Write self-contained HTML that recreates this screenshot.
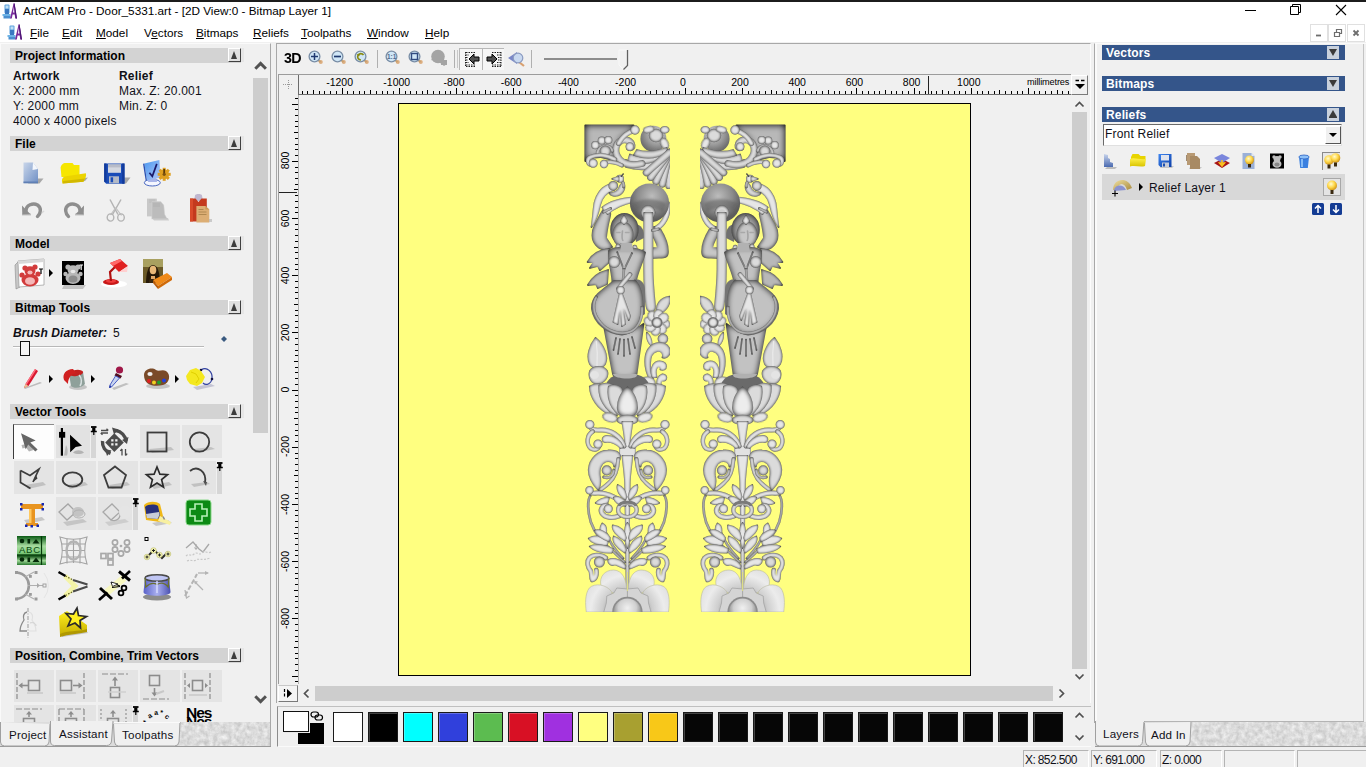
<!DOCTYPE html>
<html lang="en">
<head>
<meta charset="utf-8">
<title>ArtCAM Pro - Door_5331.art - [2D View:0 - Bitmap Layer 1]</title>
<style>
*{box-sizing:border-box;margin:0;padding:0}
html,body{width:1366px;height:767px;overflow:hidden;background:#f0f0f0;font-family:"Liberation Sans",sans-serif;color:#000}
.abs{position:absolute}
#app{position:relative;width:1366px;height:767px;overflow:hidden;background:#f0f0f0}
#titlebar{position:absolute;left:0;top:0;width:1366px;height:22px;background:#fff;border-top:2px solid #1c1c1c}
#titlebar .t{position:absolute;left:23px;top:1px;font-size:11.75px;line-height:16px;white-space:nowrap;color:#000}
#menubar{position:absolute;left:0;top:22px;width:1366px;height:20px;background:#fff}
#menubar span{position:absolute;top:3px;font-size:11.75px;line-height:16px;white-space:nowrap}
#menubar u{text-decoration:underline;text-underline-offset:1px}
.hdr{position:absolute;left:10px;width:231px;height:15px;background:#d3d3d3;font-weight:bold;font-size:12px;line-height:15px;padding-left:5px;padding-top:1px;color:#10101c;white-space:nowrap;color:#000}
.hbtn{position:absolute;left:228px;width:13px;height:14px;margin-top:-1px;background:#e0e0e0;border-right:1px solid #404040;border-bottom:1px solid #404040;border-left:1px solid #fff;border-top:1px solid #fff;box-shadow:3px 0 0 #e6e6e6}
.hbtn:after{content:"";position:absolute;left:2px;top:2px;border-left:3.5px solid transparent;border-right:3.5px solid transparent;border-bottom:8px solid #3c3c3c}

.txt{position:absolute;font-size:12px;line-height:15px;white-space:nowrap;margin-top:1px;letter-spacing:.2px;color:#101018}
.b{font-weight:bold}
.bhdr{position:absolute;left:1102px;width:243px;height:15px;background:#34558a;color:#fff;font-weight:bold;font-size:12px;line-height:15px;padding-left:4px;padding-top:1px;letter-spacing:.15px}
.bbtn{position:absolute;left:1327px;width:12px;height:13px;background:#c9d1dc}
.tri-d:after{content:"";position:absolute;left:2px;top:3px;border-left:4px solid transparent;border-right:4px solid transparent;border-top:7px solid #3a3a3a}
.tri-u:after{content:"";position:absolute;left:2px;top:2px;border-left:4px solid transparent;border-right:4px solid transparent;border-bottom:7px solid #3a3a3a}
.tri-u:before{content:"";position:absolute;left:2px;top:9px;width:8px;height:1px;background:#3a3a3a}
.sw{position:absolute;top:712px;width:30px;height:30px;border:1px solid #1a1a1a;box-shadow:inset 1px 1px 0 rgba(255,255,255,.25)}
.tb{position:absolute;width:36px;height:32px;background:#e4e4e4}
svg{position:absolute;overflow:visible}
.rl{font-size:10.500px;line-height:13px;white-space:nowrap}
</style>
</head>
<body>
<div id="app">
<div id="titlebar">
<svg class="abs" style="left:2px;top:1px" width="16" height="17" viewBox="0 0 16 17"><g id="appico"><rect x="2.5" y="1.5" width="5" height="9" rx="1" fill="#5aa0dc"/><rect x="3.5" y="2.5" width="3" height="3" fill="#bfe0f6"/><rect x="3" y="6" width="4" height="5" fill="#3a78c0"/><rect x="0.5" y="11" width="8" height="2" fill="#6db3e6"/><rect x="1.5" y="13" width="7" height="2.5" fill="#4a8fd0"/><path d="M8 15.5 L11.6 0.5 L12.6 0.5 L15 15.5 L13.2 15.5 L12.7 11.5 L10.6 11.5 L9.8 15.5 Z M11 9.5 L12.5 9.5 L11.9 4 Z" fill="#7a2a9a" fill-rule="evenodd"/><path d="M11.6 0.5 L12.6 0.5 L15 15.5 L13.8 15.5 Z" fill="#4a1672"/></g></svg>
<div class="t">ArtCAM Pro - Door_5331.art - [2D View:0 - Bitmap Layer 1]</div>
<svg class="abs" style="left:1244px;top:-1px" width="110" height="20" viewBox="0 0 110 20" fill="none" stroke="#000" stroke-width="1"><path d="M1 9.5H12"/><path d="M46.5 5.5h8v8h-8z M48.5 5.5v-2h8v8h-2" /><path d="M92 4l10 10M102 4L92 14" stroke-width="1.1"/></svg>
</div>
<div id="menubar">
<svg class="abs" style="left:7px;top:2px" width="16" height="17" viewBox="0 0 16 17"><use href="#appico"/></svg>
<span style="left:30px"><u>F</u>ile</span>
<span style="left:62px"><u>E</u>dit</span>
<span style="left:96px"><u>M</u>odel</span>
<span style="left:144px">V<u>e</u>ctors</span>
<span style="left:196px"><u>B</u>itmaps</span>
<span style="left:253px"><u>R</u>eliefs</span>
<span style="left:301px"><u>T</u>oolpaths</span>
<span style="left:367px"><u>W</u>indow</span>
<span style="left:425px"><u>H</u>elp</span>
<svg class="abs" style="left:1310px;top:1px" width="56" height="20" viewBox="0 0 56 20"><g fill="none" stroke="#e0e0e0"><rect x=".5" y="1.5" width="17" height="17"/><rect x="18.5" y="1.5" width="17" height="17"/><rect x="37.5" y="1.5" width="17" height="17"/></g><g stroke="#6e6e6e" fill="none" stroke-width="1.8"><path d="M6 12.5h5"/><path d="M24.5 9.5h5v4h-5z M26.5 9v-2.5h5v4h-2" stroke-width="1.2"/><path d="M43.5 7.5l5 5M48.5 7.5l-5 5"/></g></svg>
</div>
<!-- status bar -->
<div class="abs" style="left:0;top:747px;width:1366px;height:20px;background:#f0f0f0"></div>
<div class="abs" style="left:1023px;top:750px;width:66px;height:17px;border-left:1px solid #b4b4b4;border-top:1px solid #b4b4b4;border-right:1px solid #fff"></div>
<div class="abs" style="left:1091px;top:750px;width:66px;height:17px;border-left:1px solid #b4b4b4;border-top:1px solid #b4b4b4;border-right:1px solid #fff"></div>
<div class="abs" style="left:1160px;top:750px;width:62px;height:17px;border-left:1px solid #b4b4b4;border-top:1px solid #b4b4b4;border-right:1px solid #fff"></div>
<div class="abs" style="left:1224px;top:750px;width:71px;height:17px;border-left:1px solid #b4b4b4;border-top:1px solid #b4b4b4;border-right:1px solid #fff"></div>
<div class="abs" style="left:1297px;top:750px;width:69px;height:17px;border-left:1px solid #b4b4b4;border-top:1px solid #b4b4b4"></div>
<div class="txt" style="left:1025px;top:752px;font-size:12px;letter-spacing:-.62px">X: 852.500</div>
<div class="txt" style="left:1093px;top:752px;font-size:12px;letter-spacing:-.62px">Y: 691.000</div>
<div class="txt" style="left:1162px;top:752px;font-size:12px;letter-spacing:-.62px">Z: 0.000</div>
<!-- LEFT PANEL -->
<svg width="0" height="0" style="left:0;top:0"><defs>
<filter id="bl1" x="-30%" y="-30%" width="160%" height="160%"><feGaussianBlur stdDeviation="0.6"/></filter>
<filter id="bl2" x="-30%" y="-30%" width="160%" height="160%"><feGaussianBlur stdDeviation="1.2"/></filter>
<filter id="bl05" x="-30%" y="-30%" width="160%" height="160%"><feGaussianBlur stdDeviation="0.35"/></filter>
<linearGradient id="gdoc" x1="0" y1="0" x2="1" y2="1"><stop offset="0" stop-color="#c9d6ea"/><stop offset="1" stop-color="#6f8fc4"/></linearGradient>
<linearGradient id="gfold" x1="0" y1="0" x2="0" y2="1"><stop offset="0" stop-color="#fff04a"/><stop offset="1" stop-color="#d9c400"/></linearGradient>
<linearGradient id="gblue" x1="0" y1="0" x2="1" y2="1"><stop offset="0" stop-color="#3f86f0"/><stop offset="1" stop-color="#0c3fa8"/></linearGradient>
<linearGradient id="ggray" x1="0" y1="0" x2="0" y2="1"><stop offset="0" stop-color="#d8d8d8"/><stop offset="1" stop-color="#a8a8a8"/></linearGradient>
<radialGradient id="gbulb" cx=".4" cy=".35" r=".7"><stop offset="0" stop-color="#fffbd0"/><stop offset=".5" stop-color="#ffd84a"/><stop offset="1" stop-color="#c88a10"/></radialGradient>
</defs></svg>
<div class="abs" style="left:0;top:43px;width:271px;height:680px;background:#f0f0f0;border-top:1px solid #fafafa;border-right:1px solid #a8a8a8;border-left:1px solid #fafafa"></div>
<!-- scrollbar -->
<div class="abs" style="left:253px;top:48px;width:16px;height:667px;background:#f0f0f0"></div>
<div class="abs" style="left:253px;top:78px;width:15px;height:355px;background:#cdcdcd"></div>
<svg style="left:253px;top:55px" width="16" height="16" viewBox="0 0 16 16"><path d="M2.300 13.700L7.600 8.400L12.900 13.700" fill="none" stroke="#525252" stroke-width="3"/></svg>
<svg style="left:253px;top:692px" width="16" height="16" viewBox="0 0 16 16"><path d="M2.300 4.300L7.600 9.600L12.900 4.300" fill="none" stroke="#525252" stroke-width="3"/></svg>

<div class="hdr" style="top:48px">Project Information</div><div class="hbtn" style="top:49px"></div>
<div class="txt b" style="left:13px;top:68px">Artwork</div>
<div class="txt b" style="left:119px;top:68px">Relief</div>
<div class="txt" style="left:13px;top:83px">X: 2000 mm</div>
<div class="txt" style="left:119px;top:83px">Max. Z: 20.001</div>
<div class="txt" style="left:13px;top:98px">Y: 2000 mm</div>
<div class="txt" style="left:119px;top:98px">Min. Z: 0</div>
<div class="txt" style="left:13px;top:113px">4000 x 4000 pixels</div>

<div class="hdr" style="top:136px">File</div><div class="hbtn" style="top:137px"></div>
<!-- file icons row1 -->
<svg style="left:20px;top:159px" width="28" height="28" viewBox="0 0 28 28">
<path d="M12 19.500h11.500l-4 5H8z" fill="#8a8a8a" opacity=".7" filter="url(#bl05)"/>
<path d="M3.500 3.500h9.500l5 6.500v14.200H3.500z" fill="url(#gdoc)"/><path d="M13 3.500l5 6.500-5.500 1z" fill="#f4f7fc"/><path d="M3.500 22.500h14.500v1.700H3.500z" fill="#5f7fb4"/></svg>
<svg style="left:58px;top:159px" width="32" height="28" viewBox="0 0 32 28">
<path d="M22 20l8-1.500-3 3.500-8 1z" fill="#8a8a8a" opacity=".7" filter="url(#bl05)"/>
<path d="M2.600 8.500C3 6 5 4.500 6.500 4h8l1.500 2h5.500v12H3.500z" fill="#f6e600"/>
<path d="M4.600 24.600C3.500 22 3.500 19 6.500 17.500L27.900 14.300C28.500 17 27.500 20 25.400 22.700Z" fill="#ecd400"/><path d="M4.600 24.600L25.400 22.700C26 21.500 26.500 20.500 26.800 19.500L5 22Z" fill="#d2b800"/></svg>
<svg style="left:102px;top:159px" width="30" height="28" viewBox="0 0 30 28">
<path d="M20 18.500h8.500l-4.500 6H18z" fill="#8a8a8a" opacity=".7" filter="url(#bl05)"/>
<path d="M2.200 4.400h20.300v20.300H4.200l-2-2z" fill="#1a4cb8"/><path d="M2.200 4.400h2.300v18.500l-2.300-.2zM20.200 4.400h2.300v20.300h-2.300z" fill="#123a9a"/>
<rect x="6" y="5.400" width="13" height="8.400" fill="#d4d8e0"/><path d="M6 5.400h13v3H6z" fill="#b8bcc8"/><rect x="7" y="17.300" width="10" height="7" fill="#b4bac6"/><rect x="8.600" y="18.300" width="2.500" height="5" fill="#1a4cb8"/></svg>
<svg style="left:142px;top:157px" width="32" height="30" viewBox="0 0 32 30">
<defs><linearGradient id="gscr" x1="0" y1="0" x2="1" y2="1"><stop offset="0" stop-color="#4a98f0"/><stop offset="1" stop-color="#b4c8f8"/></linearGradient></defs>
<ellipse cx="10.300" cy="25.700" rx="8" ry="3.300" fill="#f4f6ff" stroke="#4a68c0" stroke-width="1"/><path d="M7 20h7l1 5H6z" fill="#a8b4e8"/>
<path d="M2.400 6.500l15-3.500 1 17.500-13.500 3z" fill="url(#gscr)"/><path d="M2.400 6.500l2.500 17 -1.200.2-2.700-17z" fill="#2a50b0"/>
<path d="M7.400 15.800l2.900 3.500 4.500-12.400" fill="none" stroke="#1a1a6a" stroke-width="1.700"/>
<g fill="#dea020"><circle cx="22.200" cy="17.300" r="4.800"/><rect x="20.700" y="10.800" width="3" height="13"/><rect x="15.700" y="15.800" width="13" height="3"/><rect x="20.700" y="10.800" width="3" height="13" transform="rotate(45 22.200 17.300)"/><rect x="20.700" y="10.800" width="3" height="13" transform="rotate(-45 22.200 17.300)"/></g><path d="M22.200 17.300V12" stroke="#5a3a08" stroke-width="1.800"/><circle cx="22.200" cy="17.300" r="1.600" fill="#7a5210"/></svg>
<!-- file icons row2 -->
<svg style="left:18px;top:194px" width="30" height="30" viewBox="0 0 30 30">
<path d="M4 20.500h9" stroke="#c4c4c4" stroke-width="2"/><path d="M20 22l6-5" stroke="#d8d8d8" stroke-width="1.500"/>
<path d="M8 17C8 11 15 8.500 19.500 11C24 14 22.500 20 19.500 22.500" fill="none" stroke="#8e8e8e" stroke-width="3.400" stroke-linecap="round"/><path d="M4 11.500l.3 9 8.200-.3z" fill="#8e8e8e"/></svg>
<svg style="left:58px;top:194px" width="30" height="30" viewBox="0 0 30 30">
<path d="M17 20.500h9" stroke="#c4c4c4" stroke-width="2"/>
<path d="M22 17C22 11 15 8.500 10.500 11C6 14 7.500 20 10.500 22.500" fill="none" stroke="#8e8e8e" stroke-width="3.400" stroke-linecap="round"/><path d="M26 11.500l-.3 9-8.200-.3z" fill="#8e8e8e"/></svg>
<svg style="left:103px;top:194px" width="26" height="32" viewBox="0 0 26 32">
<path d="M7 5.500l8 15M18 5.500L9.500 20.500" stroke="#b4b4b4" stroke-width="1.500" fill="none"/><path d="M12.500 13.500l6 8M12.500 14l-5 7" stroke="#c0c0c0" stroke-width="1.200"/><ellipse cx="7.500" cy="23.500" rx="3.300" ry="3.600" fill="none" stroke="#b4b4b4" stroke-width="1.400"/><ellipse cx="18" cy="23.500" rx="3.300" ry="3.600" fill="none" stroke="#b4b4b4" stroke-width="1.400"/></svg>
<svg style="left:143px;top:194px" width="28" height="30" viewBox="0 0 28 30">
<path d="M4 4.600h9.800v17.800H4z" fill="#c8c8c8"/><path d="M6 6h6M6 8h6" stroke="#b8b8b8" stroke-width=".8"/><path d="M8.800 7.600h9l3 3.500 1 9.500 2.500 4.500H8.800z" fill="#bcbcbc" stroke="#d8d8d8" stroke-width=".5"/><path d="M10 10h7M10 12h7" stroke="#adadad" stroke-width=".8"/><path d="M9 24h16l1 2.500H11z" fill="#c4c4c4" opacity=".8"/></svg>
<svg style="left:187px;top:192px" width="28" height="32" viewBox="0 0 28 32">
<path d="M8 3.600C8 1.600 15 1.600 15 3.600L16 9H7z" fill="#c0b8d0"/><path d="M3 6.600h5.500l3 3.500 3-3.500H19.800v22.800H3z" fill="#c43a1e"/><path d="M3 6.600h3v22.800H3z" fill="#d84a2a"/>
<path d="M9.400 14h9l3.900 3.500v13H9.400z" fill="#dcae74"/><path d="M18.400 14v3.500h3.900z" fill="#c89858"/><path d="M11.500 17.500h5M11.500 20h8M11.500 22.500h8" stroke="#b08850" stroke-width="1"/><path d="M22 27h3v3h-3z" fill="#b0b0b0" opacity=".6"/></svg>

<div class="hdr" style="top:236px">Model</div><div class="hbtn" style="top:237px"></div>
<!-- model icons -->
<svg style="left:13px;top:257px" width="34" height="34" viewBox="0 0 34 34">
<path d="M2 8l4-4 1 26-4 2z" fill="#c8c8c8" stroke="#8a8a8a" stroke-width=".6"/>
<path d="M5 4l26-2 0 26-25 2z" fill="#fff" stroke="#9a9a9a" stroke-width=".7"/>
<path d="M5 4l26-2v3l-26 2z" fill="#d8d8d8"/>
<g fill="#d23c3c"><circle cx="12" cy="11" r="2.6"/><circle cx="22" cy="10" r="2.6"/><ellipse cx="17" cy="14" rx="5.5" ry="4.8"/><ellipse cx="17" cy="23" rx="8.5" ry="6.5"/><circle cx="9" cy="18" r="2.6"/><circle cx="25" cy="17" r="2.6"/></g>
<ellipse cx="17" cy="24" rx="5" ry="3.8" fill="#f4b8b8"/><ellipse cx="17" cy="15.500" rx="2.6" ry="2" fill="#f4b8b8"/>
<path d="M26 12h4M28 12v5" stroke="#000" stroke-width="1.2"/></svg>
<svg style="left:48px;top:268px" width="6" height="10" viewBox="0 0 6 10"><path d="M1 1l4 4-4 4z" fill="#000"/></svg>
<svg style="left:60px;top:259px" width="28" height="32" viewBox="0 0 28 32">
<path d="M4 26h22l-3 4H2z" fill="#9a9a9a" opacity=".5" filter="url(#bl1)"/>
<rect x="2" y="2" width="22" height="24" fill="#000"/>
<g fill="#b8b8b8"><circle cx="8" cy="8" r="2.6"/><circle cx="18" cy="8" r="2.600"/><ellipse cx="13" cy="11" rx="5.5" ry="4.8"/><ellipse cx="13" cy="19" rx="7.5" ry="6"/><circle cx="5.5" cy="15" r="2.2"/><circle cx="20.500" cy="15" r="2.2"/></g>
<ellipse cx="13" cy="20" rx="4.5" ry="3.5" fill="#8c8c8c"/><ellipse cx="13" cy="12.500" rx="2.4" ry="1.8" fill="#e8e8e8"/>
<path d="M19.500 6h3.500M21.200 6v5" stroke="#fff" stroke-width="1.1"/></svg>
<svg style="left:98px;top:257px" width="34" height="34" viewBox="0 0 34 34">
<ellipse cx="16" cy="27" rx="13" ry="3.5" fill="#fff" filter="url(#bl1)"/>
<ellipse cx="13" cy="25" rx="8" ry="3" fill="#c81818"/><ellipse cx="13" cy="24" rx="5" ry="1.8" fill="#ee3a3a"/>
<path d="M13 24l-1-9 6-6" fill="none" stroke="#b01010" stroke-width="2.2"/>
<path d="M12 6l10-4 8 7-9 6z" fill="#e02020"/><path d="M21 15l9-6-1 6z" fill="#ffd0d0"/><path d="M12 6l10-4 2 2-9 5z" fill="#ff6a6a"/></svg>
<svg style="left:140px;top:256px" width="34" height="36" viewBox="0 0 34 36">
<rect x="3" y="3" width="20" height="24" fill="#6b5a28"/><rect x="3" y="3" width="20" height="8" fill="#a8a060"/>
<path d="M6 27c0-9 2-18 7-18s7 9 7 18z" fill="#241808"/><ellipse cx="13" cy="14" rx="3.3" ry="4.2" fill="#e8b878"/><path d="M9 27c0-4 2-7 4-7s5 3 5 7z" fill="#3a2810"/><path d="M11 20h4v3h-4z" fill="#e0a868"/>
<path d="M13 24l14-7 5 4-14 9z" fill="#f08a18"/><path d="M13 24l5 6v3l-5-6z" fill="#b85a08"/><path d="M18 30l14-9v3l-14 9z" fill="#d06a08"/></svg>
<div class="hdr" style="top:300px">Bitmap Tools</div><div class="hbtn" style="top:301px"></div>
<div class="txt b" style="left:13px;top:325px;font-style:italic;letter-spacing:.05px">Brush Diameter:</div>
<div class="txt" style="left:113px;top:325px">5</div>
<div class="abs" style="left:13px;top:346px;width:191px;height:2px;background:#b8b8b8;border-bottom:1px solid #fff"></div>
<div class="abs" style="left:20px;top:341px;width:10px;height:15px;background:#f4f4f4;border:1px solid #111"></div>
<svg style="left:221px;top:336px" width="6" height="6" viewBox="0 0 6 6"><path d="M3 0l3 3-3 3-3-3z" fill="#3a5a80"/></svg>
<!-- bitmap tool icons -->
<svg style="left:20px;top:366px" width="26" height="26" viewBox="0 0 26 26">
<path d="M4 22l16-6 2 1-17 6z" fill="#9a9a9a" opacity=".6" filter="url(#bl05)"/>
<path d="M4 22l1.500-4L15 3l3 2L8.500 20z" fill="#d81830"/><path d="M5.500 18L15 3l1.200.8L6.500 19z" fill="#ff7080"/><path d="M4 22l1.500-4 3 2z" fill="#e8c090"/></svg>
<svg style="left:48px;top:374px" width="6" height="10" viewBox="0 0 6 10"><path d="M1 1l4 4-4 4z" fill="#000"/></svg>
<svg style="left:61px;top:366px" width="28" height="26" viewBox="0 0 28 26">
<ellipse cx="17" cy="21" rx="9" ry="3" fill="#9a9a9a" opacity=".5" filter="url(#bl05)"/>
<path d="M8 8l14-2 2 12c-3 4-11 5-14 2z" fill="#8fa09a"/><ellipse cx="15" cy="7" rx="7.200" ry="3" fill="#c42020" transform="rotate(-8 15 7)"/>
<path d="M3 14c-2-6 2-11 9-11l3 4c-5 1-8 5-8 11z" fill="#d02020"/><path d="M18 9c3 3 3 8 1 11" fill="none" stroke="#d8e0e0" stroke-width="1.5"/></svg>
<svg style="left:90px;top:374px" width="6" height="10" viewBox="0 0 6 10"><path d="M1 1l4 4-4 4z" fill="#000"/></svg>
<svg style="left:104px;top:364px" width="28" height="28" viewBox="0 0 28 28">
<path d="M8 24l14-5 3 1-15 6z" fill="#9a9a9a" opacity=".55" filter="url(#bl05)"/>
<circle cx="15.500" cy="6" r="3.600" fill="#a01848"/><path d="M12 9l6 3-1.500 2.500-6-3z" fill="#501020"/>
<path d="M11.500 12l4 2-8 9-2 .5.500-2.500z" fill="#c8d4f0" stroke="#3a50c0" stroke-width=".9"/><path d="M6 21l-1 3 2.500-1z" fill="#2030a0"/></svg>
<svg style="left:141px;top:365px" width="32" height="26" viewBox="0 0 32 26">
<ellipse cx="17" cy="21" rx="12" ry="3" fill="#9a9a9a" opacity=".5" filter="url(#bl05)"/>
<path d="M3 10c0-6 8-8 12-5 3 2 6-1 10 1 5 3 4 12-3 14-8 2-19 1-19-10z" fill="#7a4a28"/><ellipse cx="9" cy="9" rx="2.600" ry="2" fill="#f0f0f0"/>
<circle cx="8" cy="16" r="2" fill="#e02020"/><circle cx="13" cy="17.500" r="2" fill="#f0d020"/><circle cx="18" cy="17.500" r="2" fill="#20a030"/><circle cx="23" cy="15.500" r="2" fill="#2040e0"/></svg>
<svg style="left:174px;top:374px" width="6" height="10" viewBox="0 0 6 10"><path d="M1 1l4 4-4 4z" fill="#000"/></svg>
<svg style="left:183px;top:364px" width="34" height="28" viewBox="0 0 34 28">
<path d="M10 23l18-3 4 2-18 4z" fill="#9a9ab8" opacity=".5" filter="url(#bl05)"/>
<path d="M18 6c6-4 12 2 11 9-1 5-6 7-9 4" fill="none" stroke="#3040a0" stroke-width="1.200"/><circle cx="18" cy="6" r="1.300" fill="#101040"/><circle cx="29" cy="15" r="1.300" fill="#101040"/>
<path d="M3 12l4-6 6-2 5 3 4 6-3 6-5 3-7-2-3-4z" fill="#f4e820"/><path d="M8 8l5 2 3 5-3 4" fill="none" stroke="#e0d000" stroke-width="1"/></svg>

<div class="hdr" style="top:404px">Vector Tools</div><div class="hbtn" style="top:405px"></div>
<!-- vector tools row 1 -->
<div class="abs" style="left:13px;top:424px;width:41px;height:35px;background:#fdfdfd;border-left:1px solid #3c3c3c;border-top:1px solid #8c8c8c"></div>
<div class="abs" style="left:56px;top:425px;width:34px;height:33px;background:#e2e2e2"></div>
<div class="abs" style="left:91px;top:432px;width:5px;height:26px;background:#d6d6d6"></div>
<div class="abs" style="left:140px;top:425px;width:40px;height:33px;background:#e4e4e4"></div>
<div class="abs" style="left:182px;top:425px;width:40px;height:33px;background:#e4e4e4"></div>
<svg style="left:13px;top:424px" width="42" height="36" viewBox="13 424 42 36">
<path d="M21.500 445l8-1.500 4 6.500-4.500 1.500-3-4-3.500 1z" fill="#9c9c9c" opacity=".75" filter="url(#bl1)"/>
<path d="M21 433.300L35.700 440.500L30.300 442.600L37.600 449.600L35.300 451.600L28.200 444.600L25.700 449.200Z" fill="#666"/></svg>
<svg style="left:56px;top:424px" width="36" height="36" viewBox="56 424 36 36">
<path d="M66 445c2 3 2 8 1 10.500h-3z" fill="#a8a8a8" opacity=".7" filter="url(#bl05)"/><path d="M73 452.500c3-3 8-3 11 0-3 2-8 2-11 0z" fill="#a0a0a0" opacity=".7" filter="url(#bl05)"/>
<path d="M61.900 428V455.700" stroke="#000" stroke-width="2.200"/><rect x="59" y="431.900" width="6.200" height="5.800" fill="#000"/>
<path d="M70 434.800L82 445.700L75.700 447L70.200 452.200Z" fill="#000"/></svg>
<svg style="left:90px;top:426px" width="8" height="9" viewBox="0 0 8 9"><path d="M1 1h5.500" stroke="#000" stroke-width="1.800"/><path d="M2.200 1.500h3.200v3.500H2.200z" fill="#000"/><path d="M.8 5.500h6" stroke="#000" stroke-width="1.500"/><path d="M3.800 6v3" stroke="#000" stroke-width="1.200"/></svg>
<svg style="left:98px;top:425px" width="40" height="36" viewBox="98 425 40 36" fill="none" stroke="#4c4c4c">
<path d="M116 430.500A12 12 0 0 1 126 441" stroke-width="3.400"/><path d="M125.500 446A12 12 0 0 1 116 454" stroke-width="3.400" opacity="0"/><path d="M110.500 453.500A12 12 0 0 1 102.500 441" stroke-width="3.400"/>
<path d="M112 427.500l6.500 2-4.500 5z M128.500 437l-1.500 7-5-4z M107 456l-2-7 6.500 1.500z" fill="#4c4c4c" stroke="none"/>
<path d="M114.300 433.300l9.500 9.100-9.500 9.600-9.100-9.600z" fill="#4c4c4c" stroke="none"/><path d="M111.200 439.300h2.300v2.300h-2.300zM115.200 439.300h2.300v2.300h-2.300zM111.200 443.300h2.300v2.300h-2.300zM115.200 443.300h2.300v2.300h-2.300z" fill="#f0f0f0" stroke="none"/>
<path d="M101 430.500h7M108 433h-7M106.500 428.800l1.800 1.700M102.500 434.700l-1.800-1.700" stroke-width="1.300"/><path d="M122 449v6.500M125.500 455.500V449M120.300 450.800l1.700-2M127.200 453.700l-1.700 2" stroke-width="1.300"/></svg>
<svg style="left:143px;top:428px" width="34" height="30" viewBox="0 0 34 30">
<path d="M6 21l22-2 3 3-22 3z" fill="#a0a0a0" opacity=".5" filter="url(#bl1)"/>
<rect x="4.500" y="4.500" width="19" height="19" fill="none" stroke="#3c3c3c" stroke-width="1.800"/></svg>
<svg style="left:185px;top:428px" width="34" height="30" viewBox="0 0 34 30">
<path d="M8 21l18-2 4 2-20 4z" fill="#a0a0a0" opacity=".5" filter="url(#bl1)"/>
<circle cx="14.500" cy="14" r="9.700" fill="none" stroke="#3c3c3c" stroke-width="1.800"/></svg>
<!-- row 2 -->
<div class="abs" style="left:14px;top:461px;width:40px;height:33px;background:#e4e4e4"></div>
<div class="abs" style="left:56px;top:461px;width:40px;height:33px;background:#e4e4e4"></div>
<div class="abs" style="left:98px;top:461px;width:40px;height:33px;background:#e4e4e4"></div>
<div class="abs" style="left:140px;top:461px;width:40px;height:33px;background:#e4e4e4"></div>
<div class="abs" style="left:182px;top:461px;width:34px;height:33px;background:#e4e4e4"></div>
<div class="abs" style="left:217px;top:468px;width:5px;height:26px;background:#d6d6d6"></div>
<svg style="left:216px;top:462px" width="8" height="8" viewBox="0 0 8 8"><path d="M1 1h5.500" stroke="#000" stroke-width="1.800"/><path d="M2.200 1.500h3.200v3.500H2.200z" fill="#000"/><path d="M.8 5.500h6" stroke="#000" stroke-width="1.500"/><path d="M3.800 6v3" stroke="#000" stroke-width="1.200"/></svg>
<svg style="left:17px;top:465px" width="34" height="28" viewBox="0 0 34 28">
<path d="M8 20l18-3 3 3-18 4z" fill="#a0a0a0" opacity=".5" filter="url(#bl1)"/>
<path d="M3.500 5.500l9.500 5 9-6.500-6 13" fill="none" stroke="#3c3c3c" stroke-width="1.700"/><path d="M3.500 5.500v12l10 6" fill="none" stroke="#3c3c3c" stroke-width="1.700"/><path d="M16 17l3-7 1.500 3.500z" fill="#3c3c3c"/></svg>
<svg style="left:59px;top:465px" width="34" height="28" viewBox="0 0 34 28">
<path d="M8 20l18-3 3 3-18 4z" fill="#a0a0a0" opacity=".5" filter="url(#bl1)"/>
<ellipse cx="13.500" cy="14.500" rx="9.800" ry="7.200" fill="none" stroke="#3c3c3c" stroke-width="1.800"/></svg>
<svg style="left:101px;top:463px" width="34" height="30" viewBox="0 0 34 30">
<path d="M8 22l18-3 3 3-18 4z" fill="#a0a0a0" opacity=".5" filter="url(#bl1)"/>
<path d="M14 3.500L25 12l-4.500 12.500h-13L3 12z" fill="none" stroke="#3c3c3c" stroke-width="1.800"/></svg>
<svg style="left:143px;top:463px" width="34" height="30" viewBox="0 0 34 30">
<path d="M8 22l18-3 3 3-18 4z" fill="#a0a0a0" opacity=".5" filter="url(#bl1)"/>
<path d="M14 4l2.900 7.200 7.600.5-5.900 4.900 1.900 7.500L14 20l-6.500 4.100 1.900-7.500-5.900-4.900 7.600-.5z" fill="none" stroke="#2c2c2c" stroke-width="1.700"/></svg>
<svg style="left:185px;top:463px" width="32" height="30" viewBox="0 0 32 30">
<path d="M6 21l16-2 3 2-16 3z" fill="#a0a0a0" opacity=".5" filter="url(#bl1)"/>
<path d="M5 8C12 2 22 8 20 20" fill="none" stroke="#3c3c3c" stroke-width="1.800"/><path d="M18 18l4 1-1 4z" fill="#555"/></svg>
<!-- row 3 -->
<div class="abs" style="left:56px;top:497px;width:40px;height:33px;background:#e4e4e4"></div>
<div class="abs" style="left:98px;top:497px;width:34px;height:33px;background:#e4e4e4"></div>
<div class="abs" style="left:133px;top:504px;width:5px;height:26px;background:#d6d6d6"></div>
<svg style="left:132px;top:498px" width="8" height="8" viewBox="0 0 8 8"><path d="M1 1h5.500" stroke="#000" stroke-width="1.800"/><path d="M2.200 1.500h3.200v3.500H2.200z" fill="#000"/><path d="M.8 5.500h6" stroke="#000" stroke-width="1.500"/><path d="M3.800 6v3" stroke="#000" stroke-width="1.200"/></svg>
<svg style="left:18px;top:500px" width="30" height="30" viewBox="0 0 30 30">
<path d="M6 20l18-3 3 3-18 4z" fill="#a0a0a0" opacity=".5" filter="url(#bl1)"/>
<path d="M3 4h22v5H17v14h3v3H8v-3h3V9H3z" fill="#e89420"/><path d="M11 9h2.500v14H11z" fill="#ffc860"/>
<g fill="#1828b0"><rect x="2" y="3" width="2.500" height="2.500"/><rect x="23.500" y="3" width="2.500" height="2.500"/><rect x="2" y="8" width="2.500" height="2.500"/><rect x="23.500" y="8" width="2.500" height="2.500"/><rect x="7" y="24.500" width="2.500" height="2.500"/><rect x="18.500" y="24.500" width="2.500" height="2.500"/><rect x="12.500" y="25" width="2.500" height="2.500"/></g></svg>
<svg style="left:57px;top:500px" width="36" height="30" viewBox="0 0 36 30" opacity=".75">
<path d="M6 22l20-3 4 3-20 4z" fill="#a0a0a0" opacity=".6" filter="url(#bl1)"/>
<path d="M2 12l9-8 8 8-9 8z" fill="none" stroke="#909090" stroke-width="1.300"/><ellipse cx="21" cy="12" rx="6" ry="5" fill="#b8b8b8"/><ellipse cx="22" cy="14" rx="6" ry="4" fill="none" stroke="#a0a0a0"/></svg>
<svg style="left:99px;top:500px" width="36" height="30" viewBox="0 0 36 30" opacity=".7">
<path d="M6 22l20-3 4 3-20 4z" fill="#b0b0b0" opacity=".6" filter="url(#bl1)"/>
<path d="M4 12l9-8 8 8-9 8z" fill="none" stroke="#909090" stroke-width="1.300"/><path d="M12 20c6 2 10-2 9-8" fill="none" stroke="#909090" stroke-width="1.300"/><circle cx="26" cy="12" r="6" fill="#e6e6e6"/></svg>
<svg style="left:142px;top:499px" width="32" height="32" viewBox="0 0 32 32">
<path d="M10 24l16-3 4 3-16 3z" fill="#a0a0a0" opacity=".5" filter="url(#bl1)"/>
<path d="M2 6c4-4 12-4 16-1l3 12-3 6-14-2z" fill="#f0b818"/><path d="M3 8c3-3 10-3 13-1l2 9-2 4-11-1z" fill="#28307a"/><path d="M4 15l13-2 .5 3-2 4-10.500-1z" fill="#c8ccd8"/>
<path d="M18 17l11 6-1 3-12-4z" fill="#f8f0a0"/><path d="M21 17.500l1.500 3" stroke="#888" stroke-width="1.500"/></svg>
<svg style="left:184px;top:498px" width="30" height="30" viewBox="0 0 30 30">
<rect x="2" y="2" width="25" height="25" rx="3" fill="#0c8a14" stroke="#8ad88a" stroke-width="1"/>
<path d="M11 6h7v5h5v7h-5v5h-7v-5H6v-7h5z" fill="none" stroke="#b8f0b8" stroke-width="1.600"/></svg>
<!-- vector row 4 -->
<svg style="left:16px;top:535px" width="32" height="32" viewBox="0 0 32 32">
<defs><linearGradient id="gabc" x1="0" y1="0" x2="0" y2="1"><stop offset="0" stop-color="#0a5a14"/><stop offset=".35" stop-color="#a8dca0"/><stop offset=".6" stop-color="#7ac878"/><stop offset=".68" stop-color="#0a4a10"/><stop offset=".85" stop-color="#a0d898"/><stop offset="1" stop-color="#2a7a30"/></linearGradient></defs>
<rect x="1" y="1" width="29" height="29" fill="url(#gabc)"/><path d="M1 20h29M25.500 1v29" stroke="#063a0a" stroke-width="1.200"/>
<circle cx="6" cy="6" r="2.300" fill="#042a08"/><rect x="11.500" y="4" width="2.600" height="4.500" fill="#042a08"/><path d="M16.500 8.500l3.500-4.500 3.500 4.500z" fill="#042a08"/>
<circle cx="6" cy="24.500" r="2.300" fill="#042a08"/><rect x="11.500" y="22.500" width="2.600" height="4.500" fill="#042a08"/><path d="M16.500 27l3.500-4.500 3.500 4.500z" fill="#042a08"/>
<text x="3" y="18" font-family="Liberation Sans,sans-serif" font-size="9.500" fill="#0a4a10" textLength="21">ABC</text></svg>
<svg style="left:58px;top:535px" width="32" height="32" viewBox="0 0 32 32" fill="none" stroke="#a4a4a4" stroke-width="1.100">
<path d="M2 2c9 3 18 3 27 0-3 9-3 18 0 27-9-3-18-3-27 0 3-9 3-18 0-27z"/><path d="M9 3.500v25M15.500 4v24M22 3.500v25M3.500 9h24M4 15.500h23M3.500 22h24"/><ellipse cx="15.500" cy="15.500" rx="7" ry="9" stroke-width="2.400" stroke="#b4b4b4"/></svg>
<svg style="left:99px;top:538px" width="34" height="28" viewBox="0 0 34 28" fill="none" stroke="#a8a8a8" stroke-width="1.700">
<circle cx="16" cy="4.500" r="2.600"/><circle cx="28" cy="4.500" r="2.600"/><circle cx="16" cy="11.500" r="2.600"/><circle cx="28" cy="11.500" r="2.600"/><circle cx="22" cy="15.500" r="2.600"/>
<rect x="2" y="15.500" width="5" height="5"/><rect x="9" y="15.500" width="5" height="5"/><rect x="9" y="22" width="5" height="5"/><circle cx="22" cy="8" r=".5"/></svg>
<svg style="left:142px;top:536px" width="32" height="28" viewBox="0 0 32 28">
<rect x="3" y="1.500" width="3" height="3" fill="#fff" stroke="#000" stroke-width="1"/>
<path d="M5 21l7-7 5 5 3 3 6-6" fill="none" stroke="#2c2c2c" stroke-width="2"/>
<g fill="#f4f4b0" stroke="#b8b870" stroke-width=".6"><circle cx="5" cy="21" r="2.800"/><circle cx="11.500" cy="14.500" r="2.800"/><circle cx="17.500" cy="19" r="2.800"/><circle cx="26" cy="18" r="2.800"/></g>
<g stroke="#222" stroke-width="1"><path d="M3.500 21h3M5 19.500v3M10 14.500h3M11.500 13v3M16 19h3M17.500 17.500v3M24.500 18h3M26 16.500v3"/></g></svg>
<svg style="left:184px;top:540px" width="30" height="24" viewBox="0 0 30 24" fill="none">
<path d="M2 8l7-6 6 7 4 3 6-8" stroke="#a8a8a8" stroke-width="1.300"/><path d="M12 4v5M10.500 7.500L12 9.500l1.500-2" stroke="#a8a8a8" stroke-width="1"/>
<path d="M2 16c3-3 5 1 8-2s5 2 8-1 6 1 9-1M3 21c4-2 6 1 9-1s6 1 14-2" stroke="#c8c8c8" stroke-width="1.200" stroke-dasharray="2 1.500"/></svg>
<!-- vector row 5 -->
<svg style="left:15px;top:570px" width="32" height="32" viewBox="0 0 32 32" fill="none">
<path d="M1.500 2.500C18 4 18 27 1.500 29" stroke="#9a9a9a" stroke-width="2.600"/>
<path d="M13 15.500h15M10 7l9-5M10 24l9 5" stroke="#b0b0b0" stroke-width="1.200"/><path d="M22 13l3 2.500-3 2.500z" fill="#a8a8a8"/>
<g fill="#9a9a9a"><rect x="0" y="1" width="3" height="3"/><rect x="0" y="27.500" width="3" height="3"/><rect x="14" y="5" width="2.800" height="2.800"/><rect x="14" y="23" width="2.800" height="2.800"/><rect x="19.500" y="1" width="3" height="3"/><rect x="19.500" y="27.500" width="3" height="3"/></g>
<rect x="28" y="14" width="3" height="3" stroke="#9a9a9a" stroke-width=".9"/>
<path d="M29 3A20 20 0 0 1 29 28" stroke="#e4e4e4" stroke-width="1"/></svg>
<svg style="left:57px;top:570px" width="32" height="32" viewBox="0 0 32 32" fill="none">
<path d="M8 6l10 10L8 26" stroke="#f4f4a8" stroke-width="5"/>
<path d="M1.500 2l7 4" stroke="#000" stroke-width="2.400"/><path d="M1.500 29.500l7-4" stroke="#000" stroke-width="2.400"/>
<path d="M8.500 6L16 10M8.500 25.500L16 21.500" stroke="#606020" stroke-width="1.200" stroke-dasharray="1.500 1.500"/>
<path d="M30.500 14.500L16 10M30.500 16.500L16 21.500" stroke="#4a4a4a" stroke-width="2.200"/></svg>
<svg style="left:98px;top:569px" width="34" height="34" viewBox="0 0 34 34" fill="none">
<path d="M8 24L26 9" stroke="#f8f8c0" stroke-width="7"/>
<path d="M21 2.500l11 9" stroke="#000" stroke-width="3"/><path d="M32 2L24 9.500" stroke="#000" stroke-width="2.600"/>
<path d="M2 19l12 11" stroke="#000" stroke-width="3"/><path d="M1 31l8.500-7.500" stroke="#000" stroke-width="2.600"/>
<path d="M13 13.500l9 3.500M14 18.500l8-1" stroke="#000" stroke-width="1.200"/><path d="M13 13l7 2-5.500 2.500z" fill="#fff" stroke="#000" stroke-width=".8"/>
<circle cx="26" cy="19" r="2.400" stroke="#000" stroke-width="1.800"/><circle cx="23" cy="24" r="2.400" stroke="#000" stroke-width="1.800"/></svg>
<svg style="left:141px;top:572px" width="32" height="30" viewBox="0 0 32 30">
<defs><linearGradient id="gbowl" x1="0" y1="0" x2="1" y2="0"><stop offset="0" stop-color="#5a62c8"/><stop offset=".5" stop-color="#aab0f0"/><stop offset="1" stop-color="#4a50b0"/></linearGradient></defs>
<ellipse cx="16" cy="25" rx="14" ry="3.500" fill="#8c8c8c" filter="url(#bl1)"/>
<path d="M4 6l-1.500 14c0 5 27 5 27 0L28 6z" fill="url(#gbowl)"/>
<ellipse cx="16" cy="6" rx="12" ry="3.200" fill="#c0c6f4" stroke="#4a4a4a" stroke-width="1.400"/>
<path d="M4 6l.8 9c4-4 7-5 11.200-2.500C20 10 24 11 27.200 15L28 6" fill="none" stroke="#6a7030" stroke-width="1.300"/><path d="M16 9v12" stroke="#d8dcff" stroke-width="2" opacity=".7"/></svg>
<svg style="left:183px;top:570px" width="30" height="32" viewBox="0 0 30 32" fill="none" stroke="#b4b4b4">
<path d="M2 26C6 18 10 12 14 4" stroke-width="2" stroke-dasharray="5 2"/><path d="M15 3h10" stroke-width="1.300"/><path d="M22 1l4 2-4 2z" fill="#b4b4b4" stroke="none"/>
<path d="M12 12l8 8" stroke-width="1.300"/><path d="M11 11l4 .5-3 3z" fill="#b4b4b4" stroke="none"/><path d="M2 20l1.500 8 3-2" stroke-width="1.300"/></svg>
<!-- row 6 -->
<svg style="left:18px;top:607px" width="24" height="32" viewBox="0 0 24 32" fill="none">
<path d="M10 1v30" stroke="#9a9a9a" stroke-width="1" stroke-dasharray="4 1.500 1 1.500"/>
<path d="M9 5C5 6 5 10 6 13c-2 3-4 6-4 11h7" stroke="#8a8a8a" stroke-width="1.300"/>
<path d="M11 5c4 1 4 5 3 8 2 3 4 6 4 11h-7" stroke="#e0e0e0" stroke-width="1.200"/><path d="M12 16c3-1 6 0 6 3" stroke="#d0d0d0" stroke-width="1"/></svg>
<svg style="left:57px;top:606px" width="34" height="34" viewBox="0 0 34 34">
<defs><linearGradient id="gst" x1="0" y1="0" x2="0" y2="1"><stop offset="0" stop-color="#fff020"/><stop offset="1" stop-color="#c8b000"/></linearGradient></defs>
<path d="M4 26l24-3 3 4-26 4z" fill="#9a9a9a" opacity=".5" filter="url(#bl1)"/>
<path d="M2 10l8-5 20 14v5c-8 3-18 1-27 5z" fill="url(#gst)"/><path d="M3 28c8-4 18-2 27-5v3c-9 2-18 2-27 5z" fill="#b09800"/>
<path d="M20 2l1.500 7.500 8 1-6.500 4 .5 7.500L18 17l-7 3 3-7-5-5.500 7.500.5z" fill="#fff020" stroke="#2a2a2a" stroke-width="1.700"/></svg>

<div class="hdr" style="top:648px">Position, Combine, Trim Vectors</div><div class="hbtn" style="top:649px"></div>
<!-- align row 1 -->
<div class="abs" style="left:14px;top:670px;width:40px;height:32px;background:#e4e4e4"></div>
<div class="abs" style="left:56px;top:670px;width:40px;height:32px;background:#e4e4e4"></div>
<div class="abs" style="left:98px;top:670px;width:40px;height:32px;background:#e4e4e4"></div>
<div class="abs" style="left:140px;top:670px;width:40px;height:32px;background:#e4e4e4"></div>
<div class="abs" style="left:182px;top:670px;width:40px;height:32px;background:#e4e4e4"></div>
<svg style="left:14px;top:670px" width="40" height="32" viewBox="0 0 40 32" fill="none" stroke="#8c8c8c">
<path d="M3 3v27" stroke-width="1.200" stroke-dasharray="5 2"/><rect x="14.500" y="10.500" width="11" height="10" stroke-width="1.600"/><path d="M7 15.500h7" stroke-width="1.600"/><path d="M4.500 15.500l4-3v6z" fill="#8c8c8c" stroke="none"/><path d="M13 23h16" stroke="#c8c8c8" stroke-width="1.500"/></svg>
<svg style="left:56px;top:670px" width="40" height="32" viewBox="0 0 40 32" fill="none" stroke="#8c8c8c">
<path d="M28 3v27" stroke-width="1.200" stroke-dasharray="5 2"/><rect x="4.500" y="10.500" width="11" height="10" stroke-width="1.600"/><path d="M17 15.500h7" stroke-width="1.600"/><path d="M26.500 15.500l-4-3v6z" fill="#8c8c8c" stroke="none"/><path d="M4 23h16" stroke="#c8c8c8" stroke-width="1.500"/></svg>
<svg style="left:98px;top:670px" width="40" height="32" viewBox="0 0 40 32" fill="none" stroke="#8c8c8c">
<path d="M4 4h26" stroke-width="1.200" stroke-dasharray="6 2"/><rect x="12.500" y="17.500" width="9" height="10" stroke-width="1.600"/><path d="M17 9v7" stroke-width="1.600"/><path d="M17 6.500l-3 4h6z" fill="#8c8c8c" stroke="none"/><path d="M10 22h18" stroke="#d0d0d0" stroke-width="1.500"/></svg>
<svg style="left:140px;top:670px" width="40" height="32" viewBox="0 0 40 32" fill="none" stroke="#8c8c8c">
<path d="M3 29h26" stroke-width="1.200" stroke-dasharray="6 2"/><rect x="9.500" y="5.500" width="10" height="10" stroke-width="1.600"/><path d="M14.500 18v6" stroke-width="1.600"/><path d="M14.500 26.500l-3-4h6z" fill="#8c8c8c" stroke="none"/><path d="M16 24l8-3" stroke="#c8c8c8" stroke-width="2"/></svg>
<svg style="left:182px;top:670px" width="40" height="32" viewBox="0 0 40 32" fill="none" stroke="#8c8c8c">
<path d="M3 3v27M28 3v27" stroke-width="1.200" stroke-dasharray="5 2"/><rect x="10.500" y="10.500" width="10" height="10" stroke-width="1.600"/><path d="M5 15.500l3-2.500v5zM26 15.500l-3-2.500v5z" fill="#8c8c8c" stroke="none"/><path d="M7 25h18" stroke="#c8c8c8" stroke-width="1.500"/></svg>
<!-- align row 2 (clipped) -->
<div class="abs" style="left:0;top:705px;width:252px;height:17px;overflow:hidden">
<div class="abs" style="left:14px;top:0;width:40px;height:32px;background:#e4e4e4"></div>
<div class="abs" style="left:56px;top:0;width:40px;height:32px;background:#e4e4e4"></div>
<div class="abs" style="left:98px;top:0;width:34px;height:32px;background:#e4e4e4"></div>
<div class="abs" style="left:133px;top:7px;width:5px;height:26px;background:#d6d6d6"></div>
<svg style="left:132px;top:1px" width="8" height="8" viewBox="0 0 8 8"><path d="M1 1h5.500" stroke="#000" stroke-width="1.800"/><path d="M2.200 1.500h3.200v3.500H2.200z" fill="#000"/><path d="M.8 5.500h6" stroke="#000" stroke-width="1.500"/><path d="M3.800 6v3" stroke="#000" stroke-width="1.200"/></svg>
<svg style="left:14px;top:0" width="40" height="32" viewBox="0 0 40 32" fill="none" stroke="#8c8c8c"><path d="M2 4h26" stroke-width="1.200" stroke-dasharray="6 2"/><path d="M15 6l-3 3.500h6z" fill="#8c8c8c" stroke="none"/><path d="M15 9v3" stroke-width="1.500"/><rect x="9.500" y="13.500" width="11" height="10" stroke-width="1.600"/></svg>
<svg style="left:56px;top:0" width="40" height="32" viewBox="0 0 40 32" fill="none" stroke="#8c8c8c"><path d="M3 4h25M3 4v26M28 4v26" stroke-width="1.200" stroke-dasharray="6 2"/><path d="M15 6l-3 3.500h6z" fill="#8c8c8c" stroke="none"/><path d="M15 9v3" stroke-width="1.500"/><rect x="9.500" y="13.500" width="11" height="10" stroke-width="1.600"/></svg>
<svg style="left:98px;top:0" width="40" height="32" viewBox="0 0 40 32" fill="none" stroke="#8c8c8c"><path d="M3 4v26M28 4v26" stroke-width="1.100" stroke-dasharray="2 2"/><path d="M15 5l-3 3.500h6z" fill="#8c8c8c" stroke="none"/><path d="M15 8v4" stroke-width="1.500"/><rect x="9.500" y="13.500" width="11" height="10" stroke-width="1.600"/><path d="M5 17l-2 1.500M25 17l2 1.500"/></svg>
<svg style="left:143px;top:2px" width="30" height="24" viewBox="0 0 30 24"><g font-family="Liberation Sans,sans-serif" font-size="7" font-weight="bold" fill="#000"><text x="1" y="17" transform="rotate(-50 3 15)">*</text><text x="5" y="11" transform="rotate(-30 7 9)">a</text><text x="11" y="8" transform="rotate(-10 13 6)">a</text><text x="17" y="8" transform="rotate(15 19 6)">*</text><text x="22" y="12" transform="rotate(40 24 10)">c</text></g></svg>
<div class="abs b" style="left:186px;top:-1px;font-size:15.500px;line-height:18px;letter-spacing:-1px;font-family:'Liberation Sans',sans-serif">Nes</div>
<div class="abs b" style="left:186px;top:8px;font-size:15.500px;line-height:18px;letter-spacing:-1px;font-family:'Liberation Sans',sans-serif">Nes</div>
</div>
<!-- left tabs -->
<div class="abs" style="left:0;top:722px;width:271px;height:25px;background:#dcdcdc;border-right:1px solid #a8a8a8"></div>
<svg style="left:0;top:722px" width="271" height="26" viewBox="0 0 271 26">
<defs><filter id="noise" x="0" y="0" width="100%" height="100%" color-interpolation-filters="sRGB"><feTurbulence type="fractalNoise" baseFrequency="0.22" numOctaves="3" seed="3"/><feColorMatrix type="matrix" values=".24 0 0 0 .74  .24 0 0 0 .74  .24 0 0 0 .74  0 0 0 0 1"/></filter></defs>
<rect x="180" y="0" width="90" height="24" fill="#e4e4e4"/><rect x="180" y="0" width="90" height="24" filter="url(#noise)"/>
<path d="M0 24.500h271" stroke="#9a9a9a" stroke-width="1"/>
<path d="M0.500 0v20q0 4 4 4h40q4 0 4.500-4l1-18" fill="#f0f0f0" stroke="#a0a0a0" stroke-width="1"/>
<path d="M113.500 2l1 18q.5 4 4 4h56q4 0 4.500-4l1-20" fill="#f0f0f0" stroke="#a0a0a0" stroke-width="1"/><path d="M114 .5h66" stroke="#fafafa"/>
<path d="M50.500 -1v20q0 4.500 4 4.500h52q4.500 0 5-4.500l1.500-20" fill="#f0f0f0" stroke="#a0a0a0" stroke-width="1"/>
</svg>
<div class="txt" style="left:9px;top:726px;font-size:11.600px">Project</div>
<div class="txt" style="left:59px;top:725px;font-size:11.600px">Assistant</div>
<div class="txt" style="left:122px;top:726px;font-size:11.600px">Toolpaths</div>
<!-- CENTER -->
<div class="abs" style="left:276px;top:43px;width:815px;height:660px;background:#f0f0f0;border-left:1px solid #a8a8a8;border-top:1px solid #a8a8a8;border-right:1px solid #fcfcfc"></div>
<div class="abs b" style="left:284px;top:49px;font-size:15.500px;line-height:17px;letter-spacing:-.8px;transform:scaleX(.92);transform-origin:0 0">3D</div>
<svg style="left:306px;top:48px" width="20" height="20" viewBox="0 0 20 20"><circle cx="14.800" cy="14" r="2" fill="#dcae80"/><path d="M12 12l2.500 2" stroke="#c8a070" stroke-width="2"/><circle cx="8.500" cy="8.500" r="5.400" fill="#d0e6f6" stroke="#7a8ea6" stroke-width="1.300"/><path d="M5 8.500h7M8.500 5v7" stroke="#203a70" stroke-width="1.500"/></svg>
<svg style="left:329px;top:48px" width="20" height="20" viewBox="0 0 20 20"><circle cx="14.800" cy="14" r="2" fill="#dcae80"/><path d="M12 12l2.500 2" stroke="#c8a070" stroke-width="2"/><circle cx="8.500" cy="8.500" r="5.400" fill="#d0e6f6" stroke="#7a8ea6" stroke-width="1.300"/><path d="M5 8.500h7" stroke="#203a70" stroke-width="1.700"/></svg>
<svg style="left:352px;top:48px" width="20" height="20" viewBox="0 0 20 20"><circle cx="14.800" cy="14" r="2" fill="#dcae80"/><path d="M12 12l2.500 2" stroke="#c8a070" stroke-width="2"/><circle cx="8.500" cy="8.500" r="5.400" fill="#d0e6f6" stroke="#7a8ea6" stroke-width="1.300"/><path d="M11.500 7A3.200 3.200 0 1 0 9 12" fill="none" stroke="#8a8a10" stroke-width="1.600"/><path d="M4.500 6.500l2.500 2 1.500-3z" fill="#8a8a10"/></svg>
<div class="abs" style="left:377px;top:50px;width:1px;height:18px;background:#b0b0b0"></div>
<svg style="left:383px;top:48px" width="20" height="20" viewBox="0 0 20 20"><circle cx="14.800" cy="14" r="2" fill="#dcae80"/><path d="M12 12l2.500 2" stroke="#c8a070" stroke-width="2"/><circle cx="8.500" cy="8.500" r="5.400" fill="#d0e6f6" stroke="#7a8ea6" stroke-width="1.300"/><text x="4" y="11" font-family="Liberation Sans,sans-serif" font-size="6.500" font-weight="bold" fill="#506a90">1:1</text></svg>
<svg style="left:406px;top:48px" width="20" height="20" viewBox="0 0 20 20"><circle cx="14.800" cy="14" r="2" fill="#dcae80"/><path d="M12 12l2.500 2" stroke="#c8a070" stroke-width="2"/><circle cx="8.500" cy="8.500" r="5.400" fill="#d0e6f6" stroke="#7a8ea6" stroke-width="1.300"/><rect x="5.500" y="5.500" width="6" height="6" fill="none" stroke="#304a80" stroke-width="1.400"/></svg>
<svg style="left:428px;top:48px" width="22" height="20" viewBox="0 0 22 20"><circle cx="10" cy="8.500" r="6.800" fill="#a4a4a4"/><path d="M3 12l4-4 8 2 4 6-3 2-5-4z" fill="#a4a4a4"/><rect x="13" y="12" width="6" height="5" fill="#a4a4a4"/></svg>
<div class="abs" style="left:454px;top:50px;width:1px;height:18px;background:#b0b0b0"></div>
<div class="abs" style="left:457px;top:50px;width:1px;height:18px;background:#c8c8c8"></div>
<div class="abs" style="left:459px;top:48px;width:23px;height:22px;background:#f6f6f6;border-left:1px solid #b8b8b8;border-top:1px solid #b8b8b8"></div>
<div class="abs" style="left:482px;top:48px;width:22px;height:22px;background:#f6f6f6;border-left:1px solid #b8b8b8;border-top:1px solid #b8b8b8"></div>
<svg style="left:463px;top:51px" width="18" height="17" viewBox="0 0 18 17"><path d="M3 1.500h9M3 4h3M3 6.500h2M3 9h2M3 11.500h3M3 14h9M3 15.500h9" stroke="#222" stroke-width="1.100" stroke-dasharray="1.500 1"/><path d="M2.500 1v14.500" stroke="#222" stroke-width="1" stroke-dasharray="1.500 1"/><path d="M6 8l5-5v3h5v4h-5v3z" fill="#505050" stroke="#000" stroke-width="1"/></svg>
<svg style="left:485px;top:51px" width="18" height="17" viewBox="0 0 18 17"><path d="M7 1.500h9M12 4h4M13 6.500h3M13 9h3M12 11.500h4M7 14h9M7 15.500h9" stroke="#222" stroke-width="1.100" stroke-dasharray="1.500 1"/><path d="M16 1v14.500" stroke="#222" stroke-width="1" stroke-dasharray="1.500 1"/><path d="M12 8L7 3v3H2v4h5v3z" fill="#505050" stroke="#000" stroke-width="1"/></svg>
<svg style="left:507px;top:50px" width="20" height="18" viewBox="0 0 20 18"><path d="M1 8l9-6v12z" fill="#7a86c8"/><path d="M12 12l5 4" stroke="#d8a070" stroke-width="2.200"/><circle cx="11" cy="8" r="4.800" fill="#c8d8f0" stroke="#8a9ac0" stroke-width="1.200"/></svg>
<div class="abs" style="left:531px;top:50px;width:1px;height:18px;background:#b0b0b0"></div>
<div class="abs" style="left:544px;top:58px;width:73px;height:2px;background:#8c8c8c"></div>
<svg style="left:618px;top:49px" width="12" height="22" viewBox="0 0 12 22"><path d="M1 1h8v15l-4 4-4-4z" fill="#f0f0f0" stroke="#f8f8f8" stroke-width="1"/><path d="M9.500 1v15.500l-4 4" fill="none" stroke="#606060" stroke-width="1.300"/></svg>
<div class="abs" style="left:278px;top:74px;width:793px;height:21px;background:#f0f0f0;border-top:1px solid #9c9c9c;border-bottom:1px solid #6c6c6c"></div>
<div class="abs" style="left:278px;top:75px;width:20px;height:609px;background:#f0f0f0;border-left:1px solid #9c9c9c;border-right:0"></div>
<svg style="left:0;top:0" width="1366" height="767" viewBox="0 0 1366 767" shape-rendering="crispEdges"><path d="M302.5 91V94M307.5 91V94M313.5 90V94M319.5 91V94M324.5 91V94M330.5 91V94M336.5 91V94M342.5 88V94M347.5 91V94M353.5 91V94M359.5 91V94M364.5 91V94M370.5 90V94M376.5 91V94M382.5 91V94M387.5 91V94M393.5 91V94M399.5 88V94M405.5 91V94M410.5 91V94M416.5 91V94M422.5 91V94M427.5 90V94M433.5 91V94M439.5 91V94M445.5 91V94M450.5 91V94M456.5 88V94M462.5 91V94M467.5 91V94M473.5 91V94M479.5 91V94M485.5 90V94M490.5 91V94M496.5 91V94M502.5 91V94M507.5 91V94M513.5 88V94M519.5 91V94M525.5 91V94M530.5 91V94M536.5 91V94M542.5 90V94M548.5 91V94M553.5 91V94M559.5 91V94M565.5 91V94M570.5 88V94M576.5 91V94M582.5 91V94M588.5 91V94M593.5 91V94M599.5 90V94M605.5 91V94M610.5 91V94M616.5 91V94M622.5 91V94M628.5 88V94M633.5 91V94M639.5 91V94M645.5 91V94M650.5 91V94M656.5 90V94M662.5 91V94M668.5 91V94M673.5 91V94M679.5 91V94M685.5 88V94M691.5 91V94M696.5 91V94M702.5 91V94M708.5 91V94M713.5 90V94M719.5 91V94M725.5 91V94M731.5 91V94M736.5 91V94M742.5 88V94M748.5 91V94M753.5 91V94M759.5 91V94M765.5 91V94M771.5 90V94M776.5 91V94M782.5 91V94M788.5 91V94M793.5 91V94M799.5 88V94M805.5 91V94M811.5 91V94M816.5 91V94M822.5 91V94M828.5 90V94M834.5 91V94M839.5 91V94M845.5 91V94M851.5 91V94M856.5 88V94M862.5 91V94M868.5 91V94M874.5 91V94M879.5 91V94M885.5 90V94M891.5 91V94M896.5 91V94M902.5 91V94M908.5 91V94M914.5 88V94M919.5 91V94M925.5 91V94M931.5 91V94M936.5 91V94M942.5 90V94M948.5 91V94M954.5 91V94M959.5 91V94M965.5 91V94M971.5 88V94M977.5 91V94M982.5 91V94M988.5 91V94M994.5 91V94M999.5 90V94M1005.5 91V94M1011.5 91V94M1017.5 91V94M1022.5 91V94M1028.5 88V94M1034.5 91V94M1039.5 91V94M1045.5 91V94M1051.5 91V94M1057.5 90V94M1062.5 91V94M1068.5 91V94" stroke="#000" stroke-width="1" fill="none"/><path d="M295 681.5H298M292 676.5H298M295 670.5H298M295 664.5H298M295 658.5H298M295 653.5H298M294 647.5H298M295 641.5H298M295 636.5H298M295 630.5H298M295 624.5H298M292 618.5H298M295 613.5H298M295 607.5H298M295 601.5H298M295 596.5H298M294 590.5H298M295 584.5H298M295 578.5H298M295 573.5H298M295 567.5H298M292 561.5H298M295 555.5H298M295 550.5H298M295 544.5H298M295 538.5H298M294 533.5H298M295 527.5H298M295 521.5H298M295 515.5H298M295 510.5H298M292 504.5H298M295 498.5H298M295 493.5H298M295 487.5H298M295 481.5H298M294 475.5H298M295 470.5H298M295 464.5H298M295 458.5H298M295 453.5H298M292 447.5H298M295 441.5H298M295 435.5H298M295 430.5H298M295 424.5H298M294 418.5H298M295 412.5H298M295 407.5H298M295 401.5H298M295 395.5H298M292 390.5H298M295 384.5H298M295 378.5H298M295 372.5H298M295 367.5H298M294 361.5H298M295 355.5H298M295 350.5H298M295 344.5H298M295 338.5H298M292 332.5H298M295 327.5H298M295 321.5H298M295 315.5H298M295 310.5H298M294 304.5H298M295 298.5H298M295 292.5H298M295 287.5H298M295 281.5H298M292 275.5H298M295 269.5H298M295 264.5H298M295 258.5H298M295 252.5H298M294 247.5H298M295 241.5H298M295 235.5H298M295 229.5H298M295 224.5H298M292 218.5H298M295 212.5H298M295 207.5H298M295 201.5H298M295 195.5H298M294 189.5H298M295 184.5H298M295 178.5H298M295 172.5H298M295 167.5H298M292 161.5H298M295 155.5H298M295 149.5H298M295 144.5H298M295 138.5H298M294 132.5H298M295 126.5H298M295 121.5H298M295 115.5H298M295 109.5H298M292 104.5H298M295 98.5H298" stroke="#000" stroke-width="1" fill="none"/><path d="M298.5 75V95" stroke="#6c6c6c" stroke-width="1"/><path d="M298.5 95V684" stroke="#b0b0b0" stroke-width="1"/><path d="M283 84.500h10M288.500 80v10" stroke="#9a9a9a" stroke-width="1" stroke-dasharray="1 1"/><path d="M928.500 76V94" stroke="#222" stroke-width="1"/><path d="M279 192.500H297" stroke="#222" stroke-width="1"/></svg>
<div class="abs rl" style="left:309.6px;top:76px;width:60px;text-align:center">-1200</div>
<div class="abs rl" style="left:366.8px;top:76px;width:60px;text-align:center">-1000</div>
<div class="abs rl" style="left:424.0px;top:76px;width:60px;text-align:center">-800</div>
<div class="abs rl" style="left:481.2px;top:76px;width:60px;text-align:center">-600</div>
<div class="abs rl" style="left:538.4px;top:76px;width:60px;text-align:center">-400</div>
<div class="abs rl" style="left:595.6px;top:76px;width:60px;text-align:center">-200</div>
<div class="abs rl" style="left:652.8px;top:76px;width:60px;text-align:center">0</div>
<div class="abs rl" style="left:710.0px;top:76px;width:60px;text-align:center">200</div>
<div class="abs rl" style="left:767.2px;top:76px;width:60px;text-align:center">400</div>
<div class="abs rl" style="left:824.4px;top:76px;width:60px;text-align:center">600</div>
<div class="abs rl" style="left:881.6px;top:76px;width:60px;text-align:center">800</div>
<div class="abs rl" style="left:938.8px;top:76px;width:60px;text-align:center">1000</div>
<div class="abs" style="left:1027px;top:76px;font-size:9.200px;line-height:13px;letter-spacing:-.15px">millimetres</div>
<div class="abs rl" style="left:255px;top:611.9px;width:60px;height:13px;text-align:center;transform:rotate(-90deg)">-800</div>
<div class="abs rl" style="left:255px;top:554.7px;width:60px;height:13px;text-align:center;transform:rotate(-90deg)">-600</div>
<div class="abs rl" style="left:255px;top:497.5px;width:60px;height:13px;text-align:center;transform:rotate(-90deg)">-400</div>
<div class="abs rl" style="left:255px;top:440.3px;width:60px;height:13px;text-align:center;transform:rotate(-90deg)">-200</div>
<div class="abs rl" style="left:255px;top:383.1px;width:60px;height:13px;text-align:center;transform:rotate(-90deg)">0</div>
<div class="abs rl" style="left:255px;top:325.9px;width:60px;height:13px;text-align:center;transform:rotate(-90deg)">200</div>
<div class="abs rl" style="left:255px;top:268.7px;width:60px;height:13px;text-align:center;transform:rotate(-90deg)">400</div>
<div class="abs rl" style="left:255px;top:211.5px;width:60px;height:13px;text-align:center;transform:rotate(-90deg)">600</div>
<div class="abs rl" style="left:255px;top:154.3px;width:60px;height:13px;text-align:center;transform:rotate(-90deg)">800</div>
<div class="abs" style="left:1071px;top:75px;width:17px;height:20px;background:#f0f0f0;border-left:1px solid #fff;border-top:1px solid #fff;border-right:1px solid #7a7a7a;border-bottom:1px solid #7a7a7a"></div>
<svg style="left:1074px;top:79px" width="12" height="12" viewBox="0 0 12 12"><path d="M1.500 1.500h3.500M7 1.500h3.500" stroke="#000" stroke-width="1.300"/><path d="M1 5h10l-5 5z" fill="#000"/></svg>
<div class="abs" style="left:398px;top:103px;width:573px;height:573px;background:#ffff80;border:1px solid #000"></div>
<div class="abs" style="left:1071px;top:96px;width:18px;height:588px;background:#f0f0f0"></div>
<div class="abs" style="left:1072px;top:112px;width:15px;height:557px;background:#cdcdcd"></div>
<svg style="left:1072px;top:98px" width="15" height="12" viewBox="0 0 15 12"><path d="M3.500 8.500l4-4 4 4" fill="none" stroke="#505050" stroke-width="1.700"/></svg>
<svg style="left:1072px;top:671px" width="15" height="12" viewBox="0 0 15 12"><path d="M3.500 3.500l4 4 4-4" fill="none" stroke="#505050" stroke-width="1.700"/></svg>
<div class="abs" style="left:278px;top:684px;width:812px;height:18px;background:#f0f0f0"></div>
<div class="abs" style="left:278px;top:685px;width:20px;height:17px;background:#f4f4f4;border-left:1px solid #fff;border-top:1px solid #c8c8c8;border-right:1px solid #7a7a7a;border-bottom:1px solid #7a7a7a"></div>
<svg style="left:282px;top:688px" width="12" height="11" viewBox="0 0 12 11"><path d="M2.500 1v9" stroke="#000" stroke-width="1.200" stroke-dasharray="3 1.500"/><path d="M5 1l5 4.500-5 4.500z" fill="#000"/></svg>
<svg style="left:300px;top:686px" width="12" height="15" viewBox="0 0 12 15"><path d="M8.500 3.500l-4 4 4 4" fill="none" stroke="#505050" stroke-width="1.700"/></svg>
<div class="abs" style="left:315px;top:686px;width:738px;height:15px;background:#cdcdcd"></div>
<svg style="left:1056px;top:686px" width="12" height="15" viewBox="0 0 12 15"><path d="M3.500 3.500l4 4-4 4" fill="none" stroke="#505050" stroke-width="1.700"/></svg>
<div class="abs" style="left:277px;top:706px;width:814px;height:41px;background:#f0f0f0;border-left:1px solid #8c8c8c;border-top:1px solid #c0c0c0;border-bottom:1px solid #fafafa"></div>
<div class="abs" style="left:298px;top:723px;width:26px;height:21px;background:#000"></div>
<div class="abs" style="left:283px;top:711px;width:26px;height:21px;background:#fff;border:1px solid #111;box-shadow:1px 1px 0 #e8e8e8"></div>
<svg style="left:310px;top:711px" width="14" height="11" viewBox="0 0 14 11"><rect x="1" y="1" width="7.500" height="5" rx="2.500" fill="none" stroke="#000" stroke-width="1.200"/><rect x="5" y="4" width="7.500" height="5" rx="2.500" fill="none" stroke="#000" stroke-width="1.200"/></svg>
<div class="sw" style="left:333px;background:#ffffff"></div>
<div class="sw" style="left:368px;background:#000000"></div>
<div class="sw" style="left:403px;background:#00ffff"></div>
<div class="sw" style="left:438px;background:#3040dc"></div>
<div class="sw" style="left:473px;background:#5cbc50"></div>
<div class="sw" style="left:508px;background:#d81024"></div>
<div class="sw" style="left:543px;background:#a030e0"></div>
<div class="sw" style="left:578px;background:#ffff80"></div>
<div class="sw" style="left:613px;background:#a8a030"></div>
<div class="sw" style="left:648px;background:#f8c818"></div>
<div class="sw" style="left:683px;background:#060606"></div>
<div class="sw" style="left:718px;background:#060606"></div>
<div class="sw" style="left:753px;background:#060606"></div>
<div class="sw" style="left:788px;background:#060606"></div>
<div class="sw" style="left:823px;background:#060606"></div>
<div class="sw" style="left:858px;background:#060606"></div>
<div class="sw" style="left:893px;background:#060606"></div>
<div class="sw" style="left:928px;background:#060606"></div>
<div class="sw" style="left:963px;background:#060606"></div>
<div class="sw" style="left:998px;background:#060606"></div>
<div class="sw" style="left:1033px;background:#060606"></div>
<svg style="left:1072px;top:709px" width="15" height="12" viewBox="0 0 15 12"><path d="M3.500 8.500l4-4 4 4" fill="none" stroke="#505050" stroke-width="1.700"/></svg>
<svg style="left:1072px;top:732px" width="15" height="12" viewBox="0 0 15 12"><path d="M3.500 3.500l4 4 4-4" fill="none" stroke="#505050" stroke-width="1.700"/></svg>
<!-- RELIEF -->
<svg style="left:0;top:0" width="1366" height="767" viewBox="0 0 1366 767">
<defs>
<filter id="eS" filterUnits="userSpaceOnUse" x="575" y="115" width="110" height="510" color-interpolation-filters="sRGB"><feGaussianBlur in="SourceAlpha" stdDeviation="0.9"/><feColorMatrix type="matrix" values="0 0 0 .93 -.03  0 0 0 .93 -.03  0 0 0 .93 -.03  0 0 0 0 1"/><feComposite in2="SourceAlpha" operator="in"/></filter>
<filter id="eM" filterUnits="userSpaceOnUse" x="575" y="115" width="110" height="510" color-interpolation-filters="sRGB"><feGaussianBlur in="SourceAlpha" stdDeviation="1.7"/><feColorMatrix type="matrix" values="0 0 0 .86 0  0 0 0 .86 0  0 0 0 .86 0  0 0 0 0 1"/><feComposite in2="SourceAlpha" operator="in"/></filter>
<filter id="eL" filterUnits="userSpaceOnUse" x="575" y="115" width="110" height="510" color-interpolation-filters="sRGB"><feGaussianBlur in="SourceAlpha" stdDeviation="3.2"/><feColorMatrix type="matrix" values="0 0 0 .76 0  0 0 0 .76 0  0 0 0 .76 0  0 0 0 0 1"/><feComposite in2="SourceAlpha" operator="in"/></filter>
<filter id="eD" filterUnits="userSpaceOnUse" x="575" y="115" width="110" height="510" color-interpolation-filters="sRGB"><feGaussianBlur in="SourceAlpha" stdDeviation="3"/><feColorMatrix type="matrix" values="0 0 0 .62 0  0 0 0 .62 0  0 0 0 .62 0  0 0 0 0 1"/><feComposite in2="SourceAlpha" operator="in"/></filter>
<filter id="eW" filterUnits="userSpaceOnUse" x="575" y="115" width="110" height="510" color-interpolation-filters="sRGB"><feGaussianBlur in="SourceAlpha" stdDeviation="1.400"/><feColorMatrix type="matrix" values="0 0 0 .72 0  0 0 0 .72 0  0 0 0 .72 0  0 0 0 0 1"/><feComposite in2="SourceAlpha" operator="in"/></filter>
<filter id="eA" filterUnits="userSpaceOnUse" x="575" y="115" width="110" height="510" color-interpolation-filters="sRGB"><feGaussianBlur in="SourceAlpha" stdDeviation="2.300"/><feColorMatrix type="matrix" values="0 0 0 .8 -.02  0 0 0 .8 -.02  0 0 0 .8 -.02  0 0 0 0 1"/><feComposite in2="SourceAlpha" operator="in"/></filter>
<filter id="soft" filterUnits="userSpaceOnUse" x="575" y="115" width="110" height="510"><feGaussianBlur stdDeviation="0.55"/></filter>
<linearGradient id="plate" gradientUnits="userSpaceOnUse" x1="585" y1="125" x2="625" y2="160"><stop offset="0" stop-color="#5e5e5e"/><stop offset=".45" stop-color="#a4a4a4"/><stop offset="1" stop-color="#c4c4c4"/></linearGradient>
<radialGradient id="potg" gradientUnits="userSpaceOnUse" cx="652" cy="196" r="24"><stop offset="0" stop-color="#bcbcbc"/><stop offset=".6" stop-color="#8c8c8c"/><stop offset="1" stop-color="#5c5c5c"/></radialGradient>
<radialGradient id="ballg" gradientUnits="userSpaceOnUse" cx="657" cy="134" r="20"><stop offset="0" stop-color="#d0d0d0"/><stop offset=".55" stop-color="#9a9a9a"/><stop offset="1" stop-color="#606060"/></radialGradient>
<clipPath id="colclip"><rect x="584" y="124" width="85.700" height="487.500"/></clipPath>
</defs>
<g id="column" clip-path="url(#colclip)" filter="url(#soft)">
<filter id="eP" filterUnits="userSpaceOnUse" x="575" y="115" width="110" height="510" color-interpolation-filters="sRGB"><feGaussianBlur in="SourceAlpha" stdDeviation="3.500"/><feColorMatrix type="matrix" values="0 0 0 .78 -.06  0 0 0 .78 -.06  0 0 0 .78 -.06  0 0 0 0 1"/><feComposite in2="SourceAlpha" operator="in"/></filter>
<path d="M585.300 125.300H633.500L634 129L622 137L614.500 150L616 161L600 157L589 158L585.300 161Z" fill="#000" stroke="#000" stroke-width="1.800" stroke-linejoin="round" filter="url(#eP)"/>
<circle cx="653.400" cy="138.800" r="13" fill="url(#ballg)"/>
<ellipse cx="656" cy="135.500" rx="6.300" ry="5.800" stroke="#000" stroke-width="1.800" stroke-linejoin="round" filter="url(#eM)"/>
<ellipse cx="648.700" cy="129.600" rx="4.800" ry="2.600" stroke="#000" stroke-width="1.800" stroke-linejoin="round" filter="url(#eS)" transform="rotate(-15 648.700 129.600)"/>
<ellipse cx="664.800" cy="129.800" rx="3.800" ry="2.800" stroke="#000" stroke-width="1.800" stroke-linejoin="round" filter="url(#eS)"/>
<ellipse cx="664.500" cy="143.500" rx="3.200" ry="5.200" stroke="#000" stroke-width="1.800" stroke-linejoin="round" filter="url(#eS)" transform="rotate(-25 664.500 143.500)"/>
<path d="M626 160C638 166 654 164 669.500 153V161C660 169.500 640 171.500 626 167Z" stroke="#000" stroke-width="1.800" stroke-linejoin="round" filter="url(#eM)"/>
<path d="M630 154.500C641 159.500 655 158 668.500 151.500C657 164 641 165.500 628 161Z" stroke="#000" stroke-width="1.800" stroke-linejoin="round" filter="url(#eM)"/>
<path d="M637 150C646 153 656 152 666.500 148L668 152C657 158.500 645 159 634 155Z" stroke="#000" stroke-width="1.800" stroke-linejoin="round" filter="url(#eM)"/>
<path d="M642 163.500C630 167 618.500 163 616 152.500C614.500 143 622 138 628 140.500C633 143 633 148.500 629.500 147.500" fill="none" stroke="#000" stroke-width="7" stroke-linecap="round" filter="url(#eM)"/>
<circle cx="629.800" cy="146.600" r="3.400" stroke="#000" stroke-width="1.800" stroke-linejoin="round" filter="url(#eS)"/>
<path d="M618.500 143.500C622 137 628 132 634.500 130.500" fill="none" stroke="#000" stroke-width="5" stroke-linecap="round" filter="url(#eS)"/>
<circle cx="635" cy="130" r="3.800" stroke="#000" stroke-width="1.800" stroke-linejoin="round" filter="url(#eS)"/>
<circle cx="595.300" cy="145.200" r="3.200" stroke="#000" stroke-width="1.800" stroke-linejoin="round" filter="url(#eS)"/><circle cx="601.800" cy="140.500" r="3.200" stroke="#000" stroke-width="1.800" stroke-linejoin="round" filter="url(#eS)"/><circle cx="608.300" cy="140" r="3.200" stroke="#000" stroke-width="1.800" stroke-linejoin="round" filter="url(#eS)"/>
<path d="M597.500 154C597 145.500 610.500 142.500 612.500 151" fill="none" stroke="#000" stroke-width="3.400" stroke-linecap="round" filter="url(#eS)"/>
<circle cx="605.300" cy="151" r="4.600" stroke="#000" stroke-width="1.800" stroke-linejoin="round" filter="url(#eM)"/>
<path d="M615 159.500C606 154 596 154 589.500 157.500C586.500 160 588 165 592 165" fill="none" stroke="#000" stroke-width="4.400" stroke-linecap="round" filter="url(#eS)"/>
<circle cx="593.200" cy="163.300" r="3.600" stroke="#000" stroke-width="1.800" stroke-linejoin="round" filter="url(#eS)"/>
<path d="M622 165.500C616 162 608 161 604 163.500" fill="none" stroke="#000" stroke-width="4" stroke-linecap="round" filter="url(#eS)"/>
<circle cx="604" cy="164" r="3.300" stroke="#000" stroke-width="1.800" stroke-linejoin="round" filter="url(#eS)"/>
<path d="M669.5 152.5L668.9 185.5" stroke="#000" stroke-width="7.200" stroke-linecap="round" fill="none" filter="url(#eM)"/>
<path d="M669.5 152.5L662.2 184.1" stroke="#000" stroke-width="7.200" stroke-linecap="round" fill="none" filter="url(#eM)"/>
<path d="M669.5 152.5L656.1 181.3" stroke="#000" stroke-width="7.200" stroke-linecap="round" fill="none" filter="url(#eM)"/>
<path d="M669.5 152.5L650.7 177.4" stroke="#000" stroke-width="7.200" stroke-linecap="round" fill="none" filter="url(#eM)"/>
<path d="M669.5 152.5L646.4 172.6" stroke="#000" stroke-width="7.200" stroke-linecap="round" fill="none" filter="url(#eM)"/>
<path d="M611 184C603 186 597 193 594.500 203C593 212 593 220 591.500 227C596.500 220 598.500 212 600 205C602 197 607 192 614 190Z" stroke="#000" stroke-width="1.800" stroke-linejoin="round" filter="url(#eS)"/>
<path d="M623 182C626 187 624 193 618 195.500C614 196.500 610.500 195 609.500 193C614 193.500 619 191 620 186Z" stroke="#000" stroke-width="1.800" stroke-linejoin="round" filter="url(#eM)"/>
<circle cx="613.200" cy="185.800" r="4" stroke="#000" stroke-width="1.800" stroke-linejoin="round" filter="url(#eM)"/>
<path d="M620.500 180C623 181.500 624.200 184 623.600 187" fill="none" stroke="#000" stroke-width="2.800" stroke-linecap="round" filter="url(#eS)"/>
<circle cx="620" cy="178.800" r="3.100" stroke="#000" stroke-width="1.800" stroke-linejoin="round" filter="url(#eS)"/><path d="M612.300 178.800L618.500 176.800V180.800Z" stroke="#000" stroke-width="1.800" stroke-linejoin="round" filter="url(#eS)"/><path d="M621.300 176.200L623.200 174" stroke="#000" stroke-width="1.400" stroke-linecap="round" filter="url(#eS)"/>
<path d="M604.500 208C609 209 611 212 610 216C608 224 606.500 231 606 238L612 247C607 251 600 250 596 245C591.500 240 591.500 232 595 225C598 219 601 213 604.500 208Z" stroke="#000" stroke-width="1.800" stroke-linejoin="round" filter="url(#eA)"/>
<path d="M602.500 207.500C609 202 622 198.500 634.500 197.500L634.500 201.500C624 203.500 614 208 607.500 214Z" stroke="#000" stroke-width="1.800" stroke-linejoin="round" filter="url(#eS)"/>
<path d="M603.500 212L610.500 208.500" stroke="#000" stroke-width="3" stroke-linecap="round" filter="url(#eS)"/>
<path d="M645 254.500C652 252.500 659 253 663 252.500C663.500 246 660 238 656 231.500" fill="none" stroke="#000" stroke-width="11.500" stroke-linecap="round" stroke-linejoin="round" filter="url(#eA)"/>
<path d="M657 228C662 225 669 217 667.500 204" fill="none" stroke="#000" stroke-width="5.500" stroke-linecap="round" filter="url(#eS)"/>
<ellipse cx="649.500" cy="203" rx="19.600" ry="19.600" fill="url(#potg)"/>
<path d="M631.500 204Q648 195 666 203.500L663 212Q648 203 634.500 212Z" fill="#5e5e5e" opacity=".5" filter="url(#bl2)"/>
<circle cx="648.100" cy="212.600" r="6.400" stroke="#000" stroke-width="1.800" stroke-linejoin="round" filter="url(#eM)"/>
<circle cx="648.100" cy="212.600" r="3.400" fill="#cfcfcf"/>
<path d="M634 224C641 224 645 230 644 238L636 242Z" fill="#707070"/>
<path d="M644.200 213L644.200 270C644.300 285 645 296 646.500 306C647.500 313 655.500 313 655 306C654 296 652.800 285 652.500 270L652.300 213Z" stroke="#000" stroke-width="1.800" stroke-linejoin="round" filter="url(#eM)"/>
<path d="M652.500 230.500L658.500 229" stroke="#000" stroke-width="3" stroke-linecap="round" filter="url(#eS)"/>
<ellipse cx="624.400" cy="229.500" rx="13.300" ry="15.500" stroke="#000" stroke-width="1.800" stroke-linejoin="round" filter="url(#eD)"/>
<ellipse cx="623" cy="234.500" rx="9.600" ry="12" stroke="#000" stroke-width="1.800" stroke-linejoin="round" filter="url(#eA)"/>
<path d="M622.500 231C622 235 621.500 238 622.800 240.500" fill="none" stroke="#a4a4a4" stroke-width="1.600" stroke-linecap="round"/>
<path d="M616.500 232.500h3.500M625.500 232.500h3.500" stroke="#a8a8a8" stroke-width="1.500" stroke-linecap="round"/>
<path d="M620.500 243.500h4" stroke="#999" stroke-width="1.100" stroke-linecap="round"/>
<path d="M621 221L624 216L627 221L624 224Z" stroke="#000" stroke-width="1.800" stroke-linejoin="round" filter="url(#eS)"/>
<ellipse cx="618" cy="248" rx="1.800" ry="3.400" stroke="#000" stroke-width="1.800" stroke-linejoin="round" filter="url(#eS)"/><ellipse cx="634.800" cy="249" rx="1.800" ry="3.400" stroke="#000" stroke-width="1.800" stroke-linejoin="round" filter="url(#eS)"/>
<path d="M609 249C600 250 592 254 587.700 262L594 262L590 268L598 266L600 270L609 262Z" stroke="#000" stroke-width="1.800" stroke-linejoin="round" filter="url(#eW)"/>
<path d="M608 270C600 272 592 277 588 285L596 284L598 288L607 284Z" stroke="#000" stroke-width="1.800" stroke-linejoin="round" filter="url(#eW)"/>
<path d="M609 251C615 246 638 247 645 252.500C643 262 637 272 635.500 283H612.500C612.500 273 608 262 609 251Z" stroke="#000" stroke-width="1.800" stroke-linejoin="round" filter="url(#eL)"/>
<path d="M621.500 243L632 243L633.500 252L620 252Z" fill="#b2b2b2"/>
<circle cx="614.300" cy="262" r="5" stroke="#000" stroke-width="1.800" stroke-linejoin="round" filter="url(#eM)"/>
<path d="M617 251.500L624 270L632.300 252.500" fill="none" stroke="#000" stroke-width="1.800" filter="url(#eS)"/>
<path d="M624 268L623 281" stroke="#000" stroke-width="2.600" filter="url(#eS)"/>
<path d="M634 279C640 279 645 282 645 290V314L639 318Z" fill="#757575"/>
<path d="M604 326C612 332 634 332 643.500 324L636.500 374C636 380 614 380 613 374Z" stroke="#000" stroke-width="1.800" stroke-linejoin="round" filter="url(#eL)"/>
<path d="M616 338L613.500 350M620 339L618 354M624 339.500V356M628 339L630 354M632 337L635 348" stroke="#000" stroke-width="1.600" stroke-linecap="round" filter="url(#eS)"/>
<path d="M614 281L635.500 281C640 286 642.500 295 642.500 306C642.500 322 634 334 622 334.500C608 334 594 323 592 309C591.500 303 594 298 598 294C603 289 609 285 614 281Z" stroke="#000" stroke-width="1.800" stroke-linejoin="round" filter="url(#eL)"/>
<path d="M597 296C592 303 593 314 600 322C608 332 622 336 632 331C640 326 643 316 642 306" fill="none" stroke="#000" stroke-width="2.800" filter="url(#eS)"/>
<path d="M630 274.500L618.500 288.500" stroke="#000" stroke-width="4.500" stroke-linecap="round" filter="url(#eS)"/>
<path d="M620.600 290L613.500 322L617.500 324L620.600 300L622 326L625 324L621.500 300L628.800 320L630 316Z" stroke="#000" stroke-width="1.800" stroke-linejoin="round" filter="url(#eS)"/>
<circle cx="620.600" cy="290.200" r="3.200" stroke="#000" stroke-width="1.800" stroke-linejoin="round" filter="url(#eS)"/>
<path d="M657 312C655.500 305 660 298 669.500 296.700C671 303 667 310 660 313.500Z" stroke="#000" stroke-width="1.800" stroke-linejoin="round" filter="url(#eM)"/>
<ellipse cx="664.5" cy="323.8" rx="5" ry="4.200" transform="rotate(10 664.5 323.8)" stroke="#000" stroke-width="1.800" stroke-linejoin="round" filter="url(#eS)"/>
<ellipse cx="661.4" cy="328.7" rx="5" ry="4.200" transform="rotate(55 661.4 328.7)" stroke="#000" stroke-width="1.800" stroke-linejoin="round" filter="url(#eS)"/>
<ellipse cx="655.7" cy="330.0" rx="5" ry="4.200" transform="rotate(100 655.7 330.0)" stroke="#000" stroke-width="1.800" stroke-linejoin="round" filter="url(#eS)"/>
<ellipse cx="650.8" cy="326.9" rx="5" ry="4.200" transform="rotate(145 650.8 326.9)" stroke="#000" stroke-width="1.800" stroke-linejoin="round" filter="url(#eS)"/>
<ellipse cx="649.5" cy="321.2" rx="5" ry="4.200" transform="rotate(190 649.5 321.2)" stroke="#000" stroke-width="1.800" stroke-linejoin="round" filter="url(#eS)"/>
<ellipse cx="652.6" cy="316.3" rx="5" ry="4.200" transform="rotate(235 652.6 316.3)" stroke="#000" stroke-width="1.800" stroke-linejoin="round" filter="url(#eS)"/>
<ellipse cx="658.3" cy="315.0" rx="5" ry="4.200" transform="rotate(280 658.3 315.0)" stroke="#000" stroke-width="1.800" stroke-linejoin="round" filter="url(#eS)"/>
<ellipse cx="663.2" cy="318.1" rx="5" ry="4.200" transform="rotate(325 663.2 318.1)" stroke="#000" stroke-width="1.800" stroke-linejoin="round" filter="url(#eS)"/>
<circle cx="657" cy="322.5" r="5.600" fill="#7e7e7e"/>
<circle cx="657" cy="322.5" r="3.800" stroke="#000" stroke-width="1.800" stroke-linejoin="round" filter="url(#eS)"/>
<circle cx="662.900" cy="338.700" r="4.400" stroke="#000" stroke-width="1.800" stroke-linejoin="round" filter="url(#eM)"/>
<path d="M646.900 333C650 336 652 341 651.500 345.500C648.500 343 646.500 338 646.900 333Z" stroke="#000" stroke-width="1.800" stroke-linejoin="round" filter="url(#eS)"/>
<path d="M649.700 379C646 372 644.600 364 645.500 357C646.500 349 652 343.500 659 343C666 342.500 670 347 669.700 352C669.500 356 666 358.500 662.500 357.500C664 353 661 350.500 657 351C652 352 650 358 650 364C650 370 651 375 653 379Z" stroke="#000" stroke-width="1.800" stroke-linejoin="round" filter="url(#eM)"/>
<path d="M652.500 377C650.500 371 651.500 365 655.500 362.500C660 360 666 362 666 366.500C666 369.500 663 370.500 660.500 369.500C661 367 659.500 366 658 366.500C655.500 368 655.500 373 656.500 377Z" stroke="#000" stroke-width="1.800" stroke-linejoin="round" filter="url(#eS)"/>
<path d="M657.500 385C656.500 380 658.500 375.500 662 374.500C665 374 667 376.500 666 379C665 381 662.500 381 661.500 380C660.500 382 660.500 384 661 386Z" stroke="#000" stroke-width="1.800" stroke-linejoin="round" filter="url(#eS)"/>
<ellipse cx="649" cy="381.500" rx="6" ry="3.800" transform="rotate(20 649 381.500)" stroke="#000" stroke-width="1.800" stroke-linejoin="round" filter="url(#eS)"/>
<path d="M595.500 338C603 344 609 356 605 364C602 369 593 369 590 364C586 356 590 345 595.500 338Z" stroke="#000" stroke-width="1.800" stroke-linejoin="round" filter="url(#eM)"/>
<path d="M596.300 341C597.500 350 597.500 358 597 366" stroke="#ececec" stroke-width="1.100" fill="none"/>
<path d="M590 371C594 365 604 366 607 371C609 377 604 383 598 383.500C592 384 588 378 590 371Z" stroke="#000" stroke-width="1.800" stroke-linejoin="round" filter="url(#eM)"/>
<ellipse cx="594.500" cy="375" rx="4.500" ry="4" fill="#e4e4e4"/>
<path d="M606 384C610 376 616 374 627.400 374C639 374 645 376 649 384L640 392H614Z" fill="#6a6a6a"/>
<path d="M613 374C614 380 641 380 636.500 374Z" fill="#b0b0b0"/>
<path d="M665 386.500C664.500 398 657 409 645 414.500C647 404 648 394 650 386C655 383.500 661 384 665 386.500Z" stroke="#000" stroke-width="1.800" stroke-linejoin="round" filter="url(#eM)"/>
<g transform="translate(1254.800 0) scale(-1 1)"><path d="M665 386.500C664.500 398 657 409 645 414.500C647 404 648 394 650 386C655 383.500 661 384 665 386.500Z" stroke="#000" stroke-width="1.800" stroke-linejoin="round" filter="url(#eM)"/></g>
<path d="M655.500 385.500C656.500 398 650 410 638 415.500C639 404 640 394 641 386C646 383 651 383 655.500 385.500Z" stroke="#000" stroke-width="1.800" stroke-linejoin="round" filter="url(#eM)"/>
<g transform="translate(1254.800 0) scale(-1 1)"><path d="M655.500 385.500C656.500 398 650 410 638 415.500C639 404 640 394 641 386C646 383 651 383 655.500 385.500Z" stroke="#000" stroke-width="1.800" stroke-linejoin="round" filter="url(#eM)"/></g>
<path d="M646 386.500C648 398 644 411 632 416.500C630 406 631 394 634 388C638 385 642 384.500 646 386.500Z" stroke="#000" stroke-width="1.800" stroke-linejoin="round" filter="url(#eM)"/>
<g transform="translate(1254.800 0) scale(-1 1)"><path d="M646 386.500C648 398 644 411 632 416.500C630 406 631 394 634 388C638 385 642 384.500 646 386.500Z" stroke="#000" stroke-width="1.800" stroke-linejoin="round" filter="url(#eM)"/></g>
<filter id="eC" filterUnits="userSpaceOnUse" x="575" y="115" width="110" height="510" color-interpolation-filters="sRGB"><feGaussianBlur in="SourceAlpha" stdDeviation="2.600"/><feColorMatrix type="matrix" values="0 0 0 .95 -.02  0 0 0 .95 -.02  0 0 0 .95 -.02  0 0 0 0 1"/><feComposite in2="SourceAlpha" operator="in"/></filter>
<path d="M627.400 387.500C634.500 393 637.500 402 637 409C636.500 414.500 632 416 627.400 416C622.800 416 618.300 414.500 617.800 409C617.300 402 620.300 393 627.400 387.500Z" stroke="#000" stroke-width="1.800" stroke-linejoin="round" filter="url(#eC)"/>
<ellipse cx="644.800" cy="417.500" rx="7" ry="3.800" transform="rotate(-15 644.800 417.500)" stroke="#000" stroke-width="1.800" stroke-linejoin="round" filter="url(#eS)"/>
<g transform="translate(1254.800 0) scale(-1 1)"><ellipse cx="644.800" cy="417.500" rx="7" ry="3.800" transform="rotate(-15 644.800 417.500)" stroke="#000" stroke-width="1.800" stroke-linejoin="round" filter="url(#eS)"/></g>
<ellipse cx="627.400" cy="420" rx="9.800" ry="4.300" stroke="#000" stroke-width="1.800" stroke-linejoin="round" filter="url(#eM)"/>
<path d="M622.400 422H632.400C631 432 629.500 440 629.200 447H625.600C625.300 440 624 432 622.400 422Z" stroke="#000" stroke-width="1.800" stroke-linejoin="round" filter="url(#eS)"/>
<rect x="619.600" y="447" width="15.700" height="9" fill="#e2e2e2"/><path d="M619.600 447V456M635.300 447V456" stroke="#a0a0a0" stroke-width="1"/>
<path d="M622.500 456H632.300C631.500 464 630.200 472 629.700 482L629 520L628.200 592H626.600L625.800 520L625.100 482C624.600 472 623.300 464 622.500 456Z" stroke="#000" stroke-width="1.800" stroke-linejoin="round" filter="url(#eS)"/>
<path d="M631 446C634 436 644 429.500 654 430C660 430.500 664 430 664.500 426" fill="none" stroke="#000" stroke-width="5" stroke-linecap="round" filter="url(#eS)"/>
<g transform="translate(1254.800 0) scale(-1 1)"><path d="M631 446C634 436 644 429.500 654 430C660 430.500 664 430 664.500 426" fill="none" stroke="#000" stroke-width="5" stroke-linecap="round" filter="url(#eS)"/></g>
<circle cx="665" cy="424.500" r="3.700" stroke="#000" stroke-width="1.800" stroke-linejoin="round" filter="url(#eS)"/>
<g transform="translate(1254.800 0) scale(-1 1)"><circle cx="665" cy="424.500" r="3.700" stroke="#000" stroke-width="1.800" stroke-linejoin="round" filter="url(#eS)"/></g>
<path d="M631.500 447C634 441 641 435 649 436C653 437 653 441 650 442C644 441 638 444 634 448Z" stroke="#000" stroke-width="1.800" stroke-linejoin="round" filter="url(#eS)"/>
<g transform="translate(1254.800 0) scale(-1 1)"><path d="M631.500 447C634 441 641 435 649 436C653 437 653 441 650 442C644 441 638 444 634 448Z" stroke="#000" stroke-width="1.800" stroke-linejoin="round" filter="url(#eS)"/></g>
<path d="M662 431.500C668 435 669 444 664 448.500C660 451 656 449 655.500 445" fill="none" stroke="#000" stroke-width="4.400" stroke-linecap="round" filter="url(#eS)"/>
<g transform="translate(1254.800 0) scale(-1 1)"><path d="M662 431.500C668 435 669 444 664 448.500C660 451 656 449 655.500 445" fill="none" stroke="#000" stroke-width="4.400" stroke-linecap="round" filter="url(#eS)"/></g>
<circle cx="656.800" cy="444" r="3.700" stroke="#000" stroke-width="1.800" stroke-linejoin="round" filter="url(#eS)"/>
<g transform="translate(1254.800 0) scale(-1 1)"><circle cx="656.800" cy="444" r="3.700" stroke="#000" stroke-width="1.800" stroke-linejoin="round" filter="url(#eS)"/></g>
<path d="M634.600 456C636 451.500 641 450 647 450.500C657 451 665 459 666 469C666.500 477 662 484 656.500 490C654.500 486 654 481 655 476C656 470 654.500 463.500 649 461.500C644 460 641 463 640.500 466.500C637 464 634.800 460 634.600 456Z" stroke="#000" stroke-width="1.800" stroke-linejoin="round" filter="url(#eM)"/>
<g transform="translate(1254.800 0) scale(-1 1)"><path d="M634.600 456C636 451.500 641 450 647 450.500C657 451 665 459 666 469C666.500 477 662 484 656.500 490C654.500 486 654 481 655 476C656 470 654.500 463.500 649 461.500C644 460 641 463 640.500 466.500C637 464 634.800 460 634.600 456Z" stroke="#000" stroke-width="1.800" stroke-linejoin="round" filter="url(#eM)"/></g>
<circle cx="648" cy="470.300" r="4.200" stroke="#000" stroke-width="1.800" stroke-linejoin="round" filter="url(#eM)"/>
<g transform="translate(1254.800 0) scale(-1 1)"><circle cx="648" cy="470.300" r="4.200" stroke="#000" stroke-width="1.800" stroke-linejoin="round" filter="url(#eM)"/></g>
<path d="M636.500 459C637 468 640 478 646 483C649 486 652 488 654 489.500" fill="none" stroke="#000" stroke-width="4" stroke-linecap="round" filter="url(#eS)"/>
<g transform="translate(1254.800 0) scale(-1 1)"><path d="M636.500 459C637 468 640 478 646 483C649 486 652 488 654 489.500" fill="none" stroke="#000" stroke-width="4" stroke-linecap="round" filter="url(#eS)"/></g>
<path d="M641 470C641 476 646 479 651 477" fill="none" stroke="#000" stroke-width="3" stroke-linecap="round" filter="url(#eS)"/>
<g transform="translate(1254.800 0) scale(-1 1)"><path d="M641 470C641 476 646 479 651 477" fill="none" stroke="#000" stroke-width="3" stroke-linecap="round" filter="url(#eS)"/></g>
<path d="M664 495C668 500 667 512 664 522C660 534 650 545 640 553C636 557 632 560 629.500 563" fill="none" stroke="#000" stroke-width="2.600" filter="url(#eS)"/>
<g transform="translate(1254.800 0) scale(-1 1)"><path d="M664 495C668 500 667 512 664 522C660 534 650 545 640 553C636 557 632 560 629.500 563" fill="none" stroke="#000" stroke-width="2.600" filter="url(#eS)"/></g>
<path d="M633.500 502C640 496 650 492.500 658 493C662 493.500 665 493 665.300 490.500" fill="none" stroke="#000" stroke-width="5" stroke-linecap="round" filter="url(#eS)"/>
<g transform="translate(1254.800 0) scale(-1 1)"><path d="M633.500 502C640 496 650 492.500 658 493C662 493.500 665 493 665.300 490.500" fill="none" stroke="#000" stroke-width="5" stroke-linecap="round" filter="url(#eS)"/></g>
<circle cx="665.300" cy="490.300" r="3.300" stroke="#000" stroke-width="1.800" stroke-linejoin="round" filter="url(#eS)"/>
<g transform="translate(1254.800 0) scale(-1 1)"><circle cx="665.300" cy="490.300" r="3.300" stroke="#000" stroke-width="1.800" stroke-linejoin="round" filter="url(#eS)"/></g>
<path d="M646 498C651 498 656 500 659 503C655 505 650 504 647 502Z" stroke="#000" stroke-width="1.800" stroke-linejoin="round" filter="url(#eS)"/>
<g transform="translate(1254.800 0) scale(-1 1)"><path d="M646 498C651 498 656 500 659 503C655 505 650 504 647 502Z" stroke="#000" stroke-width="1.800" stroke-linejoin="round" filter="url(#eS)"/></g>
<path d="M636 516C642 518.500 650 518 653 513C655 509 652 505 648 505.500" fill="none" stroke="#000" stroke-width="5" stroke-linecap="round" filter="url(#eS)"/>
<g transform="translate(1254.800 0) scale(-1 1)"><path d="M636 516C642 518.500 650 518 653 513C655 509 652 505 648 505.500" fill="none" stroke="#000" stroke-width="5" stroke-linecap="round" filter="url(#eS)"/></g>
<circle cx="646.500" cy="508.800" r="3.600" stroke="#000" stroke-width="1.800" stroke-linejoin="round" filter="url(#eS)"/>
<g transform="translate(1254.800 0) scale(-1 1)"><circle cx="646.500" cy="508.800" r="3.600" stroke="#000" stroke-width="1.800" stroke-linejoin="round" filter="url(#eS)"/></g>
<path d="M628.500 497C629.500 491 632 486.500 637 485C638.500 490 635 496 629.500 499.500Z" stroke="#000" stroke-width="1.800" stroke-linejoin="round" filter="url(#eS)"/>
<g transform="translate(1254.800 0) scale(-1 1)"><path d="M628.500 497C629.500 491 632 486.500 637 485C638.500 490 635 496 629.500 499.500Z" stroke="#000" stroke-width="1.800" stroke-linejoin="round" filter="url(#eS)"/></g>
<path d="M629 503C632 498 637 496 641 497.500C640 502 635 505 629.500 506Z" stroke="#000" stroke-width="1.800" stroke-linejoin="round" filter="url(#eS)"/>
<g transform="translate(1254.800 0) scale(-1 1)"><path d="M629 503C632 498 637 496 641 497.500C640 502 635 505 629.500 506Z" stroke="#000" stroke-width="1.800" stroke-linejoin="round" filter="url(#eS)"/></g>
<ellipse cx="627.400" cy="510" rx="9.300" ry="7" fill="none" stroke="#000" stroke-width="4.200" filter="url(#eS)"/>
<path d="M619 506C620 501 635 501 636 506" fill="none" stroke="#7a7a7a" stroke-width="3"/>
<path d="M627.400 523C631 528 631 538 627.400 548C624 538 624 528 627.400 523Z" stroke="#000" stroke-width="1.800" stroke-linejoin="round" filter="url(#eS)"/>
<path d="M629 538C630 531 635 526.500 642 525.500C643 530 638 536 630 540.500Z" stroke="#000" stroke-width="1.800" stroke-linejoin="round" filter="url(#eS)"/>
<g transform="translate(1254.800 0) scale(-1 1)"><path d="M629 538C630 531 635 526.500 642 525.500C643 530 638 536 630 540.500Z" stroke="#000" stroke-width="1.800" stroke-linejoin="round" filter="url(#eS)"/></g>
<path d="M629 550C631 543 636 538 641 536.500C643 541 638 548 630 552.500Z" stroke="#000" stroke-width="1.800" stroke-linejoin="round" filter="url(#eS)"/>
<g transform="translate(1254.800 0) scale(-1 1)"><path d="M629 550C631 543 636 538 641 536.500C643 541 638 548 630 552.500Z" stroke="#000" stroke-width="1.800" stroke-linejoin="round" filter="url(#eS)"/></g>
<path d="M631 559C638 552 646 542 650 530" fill="none" stroke="#000" stroke-width="2.400" filter="url(#eS)"/>
<g transform="translate(1254.800 0) scale(-1 1)"><path d="M631 559C638 552 646 542 650 530" fill="none" stroke="#000" stroke-width="2.400" filter="url(#eS)"/></g>
<path d="M649 534C648 529 649 525 652.500 523.500C655 527 655 532 652 537Z" stroke="#000" stroke-width="1.800" stroke-linejoin="round" filter="url(#eS)"/>
<g transform="translate(1254.800 0) scale(-1 1)"><path d="M649 534C648 529 649 525 652.500 523.500C655 527 655 532 652 537Z" stroke="#000" stroke-width="1.800" stroke-linejoin="round" filter="url(#eS)"/></g>
<path d="M647 542C652 536 660 535 666 538.500C663 543 655 545 648 545Z" stroke="#000" stroke-width="1.800" stroke-linejoin="round" filter="url(#eS)"/>
<g transform="translate(1254.800 0) scale(-1 1)"><path d="M647 542C652 536 660 535 666 538.500C663 543 655 545 648 545Z" stroke="#000" stroke-width="1.800" stroke-linejoin="round" filter="url(#eS)"/></g>
<path d="M642 549C649 545 659 544 665 546.500C661 551 651 553 643 552.500Z" stroke="#000" stroke-width="1.800" stroke-linejoin="round" filter="url(#eS)"/>
<g transform="translate(1254.800 0) scale(-1 1)"><path d="M642 549C649 545 659 544 665 546.500C661 551 651 553 643 552.500Z" stroke="#000" stroke-width="1.800" stroke-linejoin="round" filter="url(#eS)"/></g>
<path d="M645 538C648 532 655 529 660 530.500C658 535 652 539 646 541Z" stroke="#000" stroke-width="1.800" stroke-linejoin="round" filter="url(#eS)"/>
<g transform="translate(1254.800 0) scale(-1 1)"><path d="M645 538C648 532 655 529 660 530.500C658 535 652 539 646 541Z" stroke="#000" stroke-width="1.800" stroke-linejoin="round" filter="url(#eS)"/></g>
<path d="M649 558C653 554 662 554 665.500 558C668.500 562 667 568 664 571C663 574 664 578 662.500 580C659 579 657.500 574 658.500 570" fill="none" stroke="#000" stroke-width="4.600" stroke-linecap="round" stroke-linejoin="round" filter="url(#eS)"/>
<g transform="translate(1254.800 0) scale(-1 1)"><path d="M649 558C653 554 662 554 665.500 558C668.500 562 667 568 664 571C663 574 664 578 662.500 580C659 579 657.500 574 658.500 570" fill="none" stroke="#000" stroke-width="4.600" stroke-linecap="round" stroke-linejoin="round" filter="url(#eS)"/></g>
<circle cx="655.400" cy="562" r="4.600" stroke="#000" stroke-width="1.800" stroke-linejoin="round" filter="url(#eM)"/>
<g transform="translate(1254.800 0) scale(-1 1)"><circle cx="655.400" cy="562" r="4.600" stroke="#000" stroke-width="1.800" stroke-linejoin="round" filter="url(#eM)"/></g>
<path d="M629.500 566C633 560 641 557.500 646.500 560C647 564 643 566 640 564.500C636 566 633 567.500 630 568.500Z" stroke="#000" stroke-width="1.800" stroke-linejoin="round" filter="url(#eS)"/>
<g transform="translate(1254.800 0) scale(-1 1)"><path d="M629.500 566C633 560 641 557.500 646.500 560C647 564 643 566 640 564.500C636 566 633 567.500 630 568.500Z" stroke="#000" stroke-width="1.800" stroke-linejoin="round" filter="url(#eS)"/></g>
<radialGradient id="petg" gradientUnits="userSpaceOnUse" cx="627.400" cy="612" r="46"><stop offset=".35" stop-color="#9a9a9a"/><stop offset=".55" stop-color="#cecece"/><stop offset=".8" stop-color="#ececec"/><stop offset="1" stop-color="#e0e0e0"/></radialGradient>
<radialGradient id="domeg" gradientUnits="userSpaceOnUse" cx="627.400" cy="608" r="15"><stop offset="0" stop-color="#f0f0f0"/><stop offset=".6" stop-color="#d0d0d0"/><stop offset="1" stop-color="#8a8a8a"/></radialGradient>
<path d="M628 593C628 580 632 570.500 641 570C650.500 570 655.500 577 654 585C652 591 640 595 628 593Z" fill="url(#petg)" stroke="#b8b8a0" stroke-width=".6"/>
<g transform="translate(1254.800 0) scale(-1 1)"><path d="M628 593C628 580 632 570.500 641 570C650.500 570 655.500 577 654 585C652 591 640 595 628 593Z" fill="url(#petg)" stroke="#b8b8a0" stroke-width=".6"/></g>
<path d="M643 592C648 584.500 660 582.500 665.500 588C670 594 669.500 604 668.500 612H643Z" fill="url(#petg)" stroke="#b8b8a0" stroke-width=".6"/>
<g transform="translate(1254.800 0) scale(-1 1)"><path d="M643 592C648 584.500 660 582.500 665.500 588C670 594 669.500 604 668.500 612H643Z" fill="url(#petg)" stroke="#b8b8a0" stroke-width=".6"/></g>
<path d="M627.400 589L638 588L641 593L648 596L648.500 603L651 612H627.400Z" fill="#d4d4d4" stroke="#a4a4a4" stroke-width=".8"/>
<g transform="translate(1254.800 0) scale(-1 1)"><path d="M627.400 589L638 588L641 593L648 596L648.500 603L651 612H627.400Z" fill="#d4d4d4" stroke="#a4a4a4" stroke-width=".8"/></g>
<circle cx="627.400" cy="612" r="15.200" fill="#8c8c8c"/>
<circle cx="627.400" cy="612" r="13.600" fill="url(#domeg)"/>
<path d="M627.400 572V591" stroke="#e0e080" stroke-width="1"/>
</g>
<use href="#column" transform="translate(1370 0) scale(-1 1)"/>
</svg>
<!-- RIGHT PANEL -->
<div class="abs" style="left:1094px;top:43px;width:272px;height:680px;background:#f0f0f0;border-left:1px solid #a8a8a8;border-top:1px solid #fafafa"></div>
<div class="abs" style="left:1095px;top:44px;width:2px;height:678px;background:#fafafa"></div>
<div class="bhdr" style="top:45px">Vectors</div><div class="bbtn tri-d" style="top:46px"></div>
<div class="bhdr" style="top:76px">Bitmaps</div><div class="bbtn tri-d" style="top:77px"></div>
<div class="bhdr" style="top:107px">Reliefs</div><div class="bbtn tri-u" style="top:108px"></div>
<!-- dropdown -->
<div class="abs" style="left:1103px;top:124px;width:239px;height:22px;background:#fff;border-left:1px solid #6a6a6a;border-top:1px solid #6a6a6a;border-right:1px solid #e0e0e0;border-bottom:1px solid #e0e0e0"></div>
<div class="txt" style="left:1105px;top:126px">Front Relief</div>
<div class="abs" style="left:1325px;top:126px;width:16px;height:18px;background:#f0f0f0;border-right:1px solid #555;border-bottom:1px solid #555;border-left:1px solid #fff;border-top:1px solid #fff"></div>
<svg style="left:1328px;top:132px" width="10" height="6" viewBox="0 0 10 6"><path d="M1 1h8l-4 4z" fill="#000"/></svg>
<!-- icon row -->
<svg style="left:1103px;top:152px" width="16" height="18" viewBox="0 0 16 18"><defs><linearGradient id="gbars" x1="0" y1="0" x2="0" y2="1"><stop offset="0" stop-color="#c8d4ec"/><stop offset="1" stop-color="#4a6ab0"/></linearGradient></defs>
<path d="M4 15h10l-2 2H2z" fill="#9a9a9a" opacity=".6"/><path d="M1 2l4 1v3l2 1v3l3 1v4H1z" fill="url(#gbars)"/></svg>
<svg style="left:1128px;top:152px" width="20" height="18" viewBox="0 0 20 18"><path d="M3 5l1.500-3h6l2 2h5v4H3z" fill="#e8d400"/><path d="M2 7c4-2 9 1 16 0l-1 7c-5 1.500-10-1-15 .5z" fill="url(#gfold)"/></svg>
<svg style="left:1157px;top:152px" width="18" height="18" viewBox="0 0 18 18"><path d="M4 14h13l-2 2H3z" fill="#9a9a9a" opacity=".5"/><path d="M1.500 2h13v13H3.500l-2-2z" fill="url(#gblue)"/><rect x="4" y="3" width="8" height="5.500" fill="#e0e4ee"/><rect x="5" y="10.500" width="7" height="4.500" fill="#c4cad8"/><rect x="6" y="11.500" width="2" height="3" fill="#1d4fb0"/></svg>
<svg style="left:1185px;top:151px" width="18" height="20" viewBox="0 0 18 20"><path d="M5 16h12l-2 2H4z" fill="#9a9a9a" opacity=".5"/><path d="M2 2h8v12H2z" fill="#b89a74"/><path d="M5 5h7l3 3v10H5z" fill="#a88a64"/><path d="M2 4l-1 1 1 1-1 1 1 1-1 1 1 1" stroke="#8a7050" fill="none" stroke-width=".8"/></svg>
<svg style="left:1212px;top:152px" width="20" height="18" viewBox="0 0 20 18"><path d="M2 11l8-4 8 4-8 5z" fill="#a81414"/><path d="M2 6l8-4 8 4-8 5z" fill="#7a86dc"/><path d="M10 8v5M7.500 11l2.500 3 2.500-3z" fill="#f8c020" stroke="#f8c020" stroke-width="1.500"/></svg>
<svg style="left:1241px;top:151px" width="16" height="20" viewBox="0 0 16 20"><path d="M1.500 2h9l3 3v13h-12z" fill="#9ab0d8"/><path d="M10.500 2v3h3z" fill="#e0e8f4"/><circle cx="8.500" cy="9" r="4.500" fill="url(#gbulb)"/><rect x="7" y="13" width="3" height="3.500" fill="#3a2a10"/></svg>
<svg style="left:1269px;top:152px" width="16" height="18" viewBox="0 0 16 18"><rect x="1" y="1.500" width="14" height="15" fill="#000"/><g fill="#c0c0c0"><circle cx="5" cy="5" r="1.700"/><circle cx="11" cy="5" r="1.700"/><ellipse cx="8" cy="7" rx="3.500" ry="3"/><ellipse cx="8" cy="12" rx="4.500" ry="3.800"/></g><ellipse cx="8" cy="12.500" rx="2.600" ry="2" fill="#888"/></svg>
<svg style="left:1297px;top:152px" width="14" height="18" viewBox="0 0 14 18"><path d="M2 5h10l-1.200 11H3.200z" fill="#3a80e0"/><ellipse cx="7" cy="5" rx="5.200" ry="2" fill="#8cc0f8" stroke="#2a60c0" stroke-width=".8"/><path d="M5 7v8" stroke="#a0d0ff" stroke-width="1.500"/></svg>
<div class="abs" style="left:1322px;top:152px;width:18px;height:18px;background:#e8e8e8;border-left:1px solid #8a8a8a;border-top:1px solid #8a8a8a"></div>
<svg style="left:1322px;top:151px" width="20" height="20" viewBox="0 0 20 20"><circle cx="7" cy="9" r="4.800" fill="url(#gbulb)"/><rect x="5.500" y="13.500" width="3" height="4" fill="#3a2a10"/><circle cx="13.500" cy="7" r="4.800" fill="url(#gbulb)"/><rect x="12" y="11.500" width="3" height="4" fill="#3a2a10"/></svg>
<!-- layer row -->
<div class="abs" style="left:1102px;top:174px;width:243px;height:26px;background:#d8d8d8"></div>
<svg style="left:1110px;top:176px" width="24" height="22" viewBox="0 0 24 22"><defs><linearGradient id="garch" x1="0" y1="0" x2="1" y2="1"><stop offset="0" stop-color="#f0e0a0"/><stop offset="1" stop-color="#a88a40"/></linearGradient></defs>
<path d="M3 14C3 2 18 0 22 12l-5 2C15 6 8 6 7 14z" fill="url(#garch)"/><path d="M4 15c0-6 9-8 12-1z" fill="#8a92d0"/><path d="M2 17.500h6M5 14.500v6" stroke="#000" stroke-width="1.100"/></svg>
<svg style="left:1138px;top:182px" width="6" height="10" viewBox="0 0 6 10"><path d="M1 1l4 4-4 4z" fill="#000"/></svg>
<div class="txt" style="left:1149px;top:180px">Relief Layer 1</div>
<div class="abs" style="left:1323px;top:178px;width:18px;height:18px;background:#e4e4e4;border:1px solid #a8a8a8"></div>
<svg style="left:1324px;top:178px" width="16" height="18" viewBox="0 0 16 18"><circle cx="8" cy="7.500" r="5" fill="url(#gbulb)"/><rect x="6.500" y="12" width="3" height="4" fill="#3a2a10"/></svg>
<!-- up/down -->
<svg style="left:1312px;top:203px" width="31" height="12" viewBox="0 0 31 12"><rect x="0" y="0" width="12" height="12" rx="1.500" fill="#143c94"/><rect x="18" y="0" width="12" height="12" rx="1.500" fill="#143c94"/><path d="M6 10V3M3 5.500l3-3 3 3" fill="none" stroke="#fff" stroke-width="1.500"/><path d="M24 2v7M21 6.500l3 3 3-3" fill="none" stroke="#fff" stroke-width="1.500"/></svg>
<div class="abs" style="left:1363px;top:44px;width:1px;height:678px;background:#c4c4c4"></div><div class="abs" style="left:1144px;top:721px;width:220px;height:1px;background:#b4b4b4"></div>
<!-- right tabs -->
<div class="abs" style="left:1095px;top:722px;width:271px;height:25px;background:#dcdcdc"></div>
<svg style="left:1095px;top:721px" width="271" height="27" viewBox="0 0 271 27">
<rect x="96" y="1" width="175" height="24" fill="#e4e4e4"/><rect x="96" y="1" width="175" height="24" filter="url(#noise)"/>
<path d="M0 25.500h271" stroke="#9a9a9a" stroke-width="1"/>
<path d="M49.500 2l1 19q.5 4 4 4h36q4 0 4.500-4l1-20" fill="#f0f0f0" stroke="#a0a0a0" stroke-width="1"/>
<path d="M0.500 0v21q0 4 4 4h38q4.500 0 5-4.500l1.500-20.500" fill="#f0f0f0" stroke="#a0a0a0" stroke-width="1"/><path d="M1 0h48" stroke="#f0f0f0" stroke-width="2"/>
</svg>
<div class="txt" style="left:1103px;top:725px;font-size:11.600px">Layers</div>
<div class="txt" style="left:1151px;top:726px;font-size:11.600px">Add In</div>
</div>
</body>
</html>
